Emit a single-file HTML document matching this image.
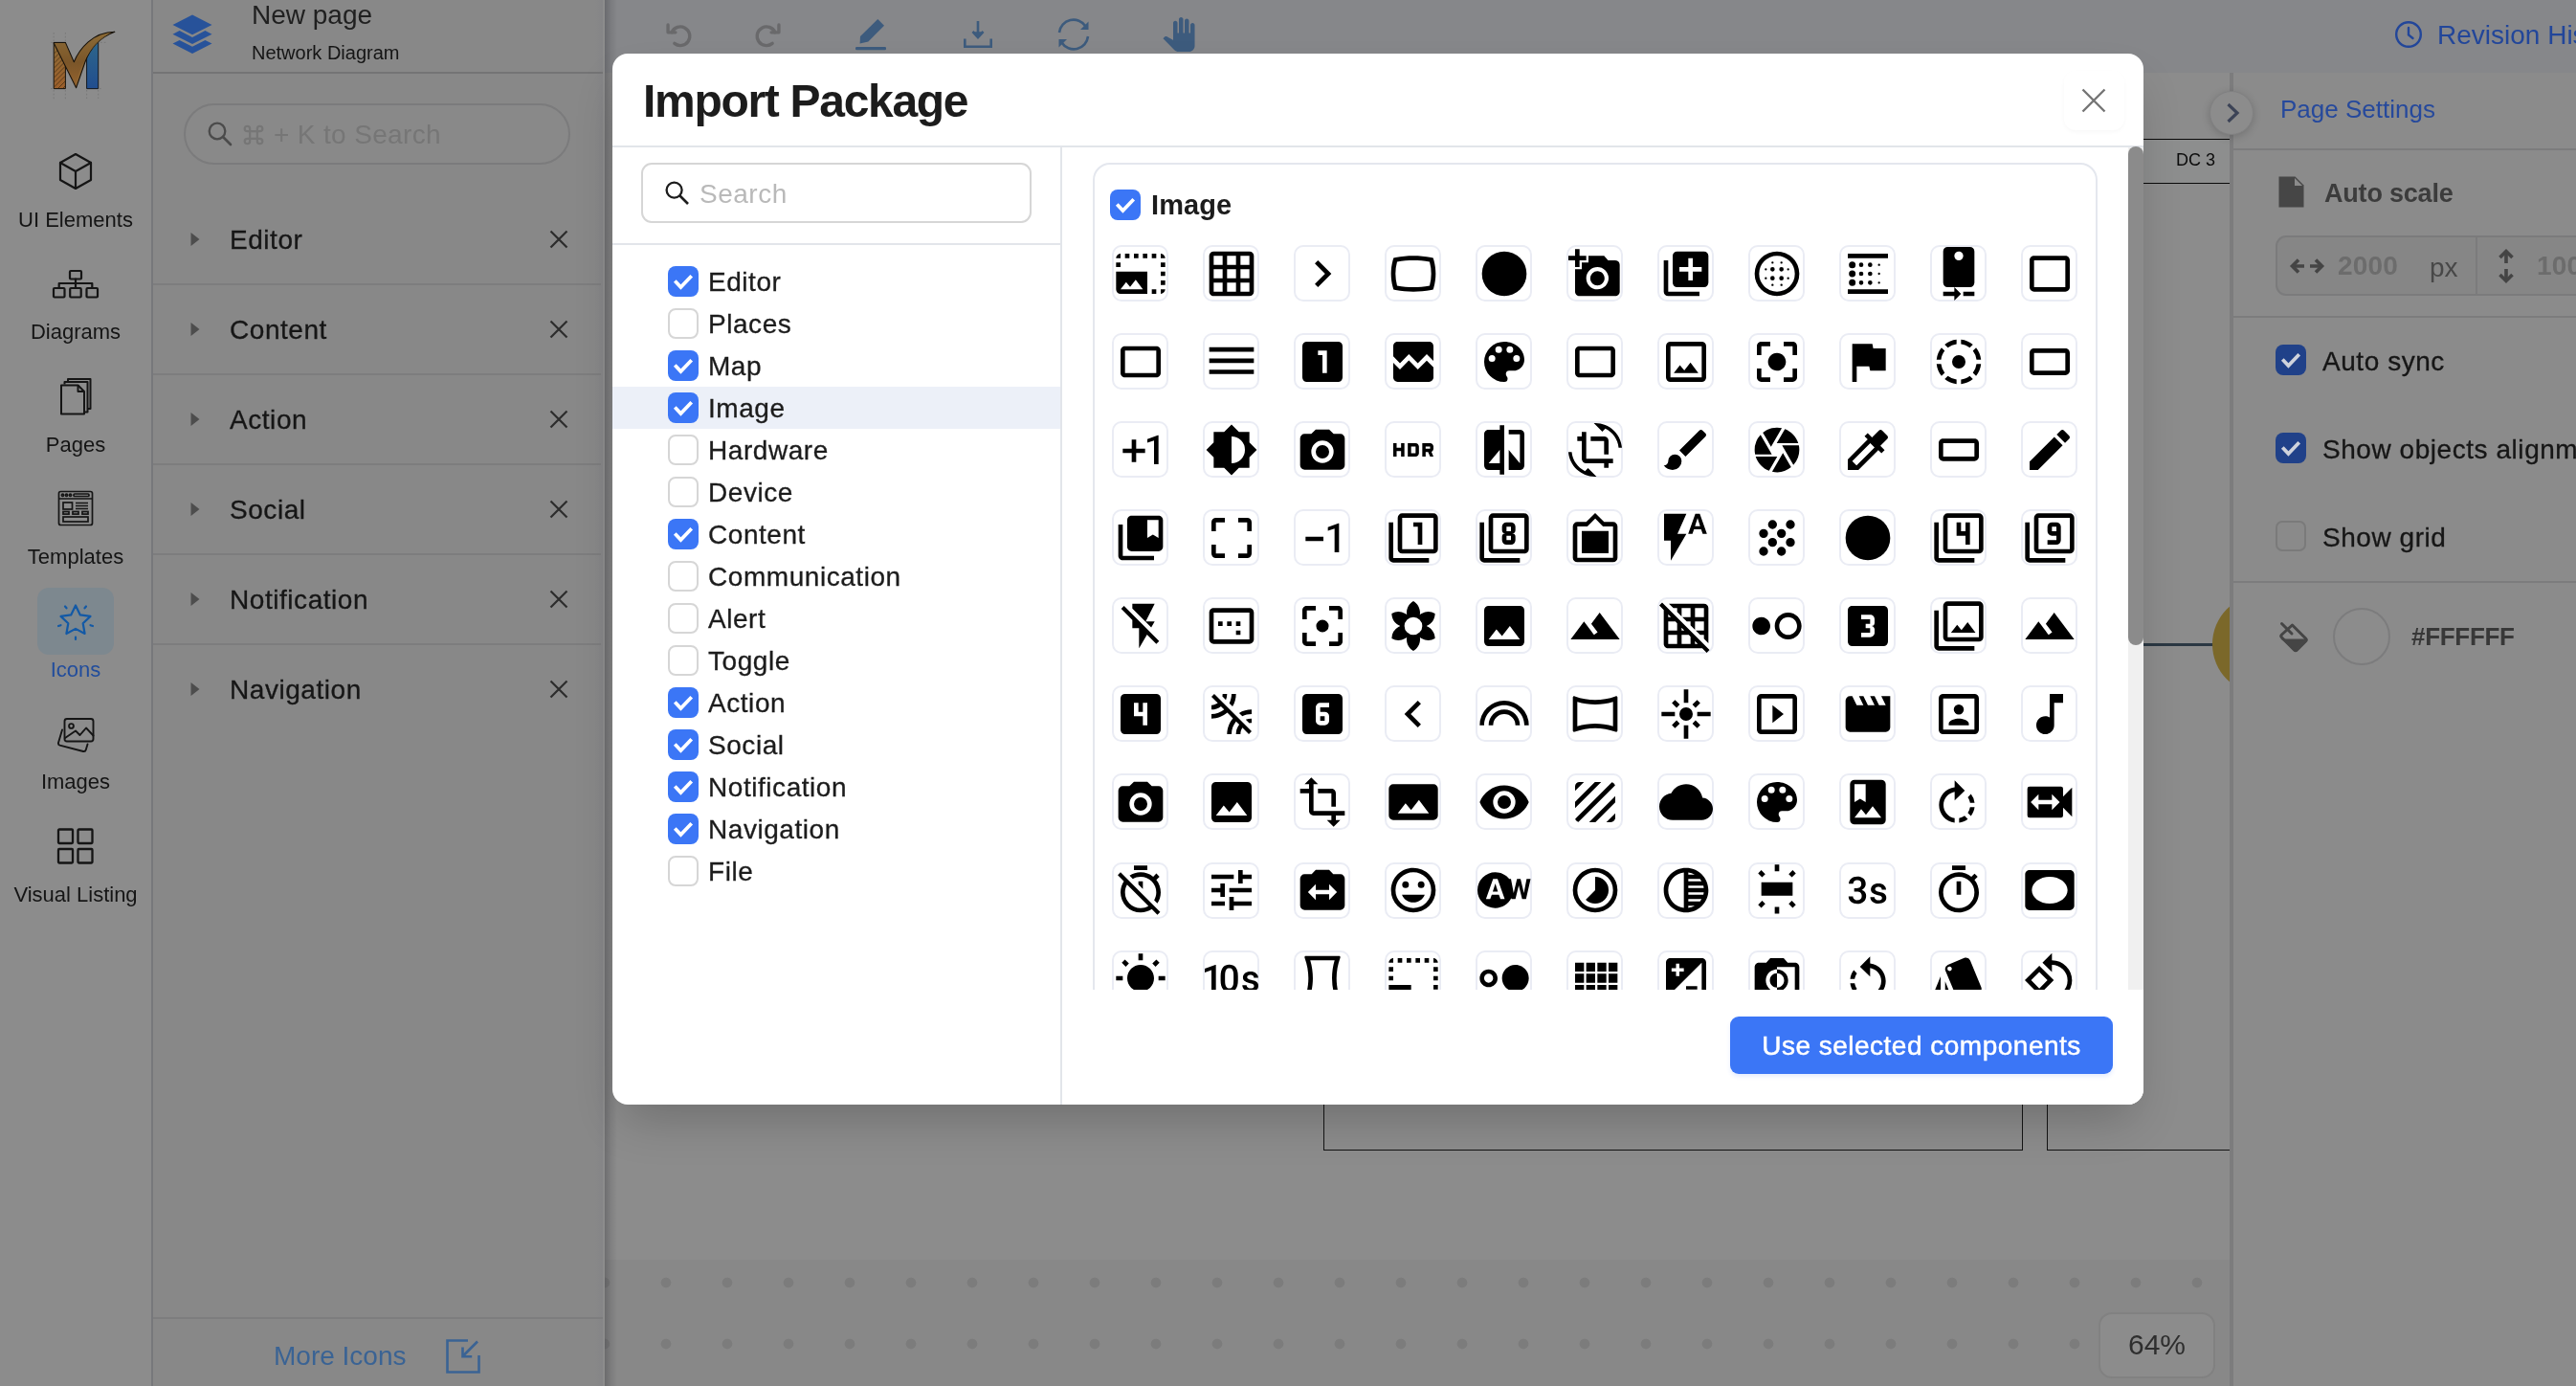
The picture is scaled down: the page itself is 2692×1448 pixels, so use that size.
<!DOCTYPE html>
<html><head><meta charset="utf-8"><title>Import Package</title><style>
*{box-sizing:border-box;margin:0;padding:0}
html{overflow:hidden}
body{width:2692px;height:1448px;overflow:hidden;zoom:calc(100vw / 2692px);position:relative;background:#8b8b8b;font-family:"Liberation Sans",sans-serif;color:#1a1a1a}
.a{position:absolute}
.t{white-space:nowrap;will-change:transform}
svg{display:block;overflow:visible}
</style></head>
<body>
<div class="a" style="left:631px;top:76px;width:1703px;height:1240px;background:#8c8c8c"></div>
<div class="a" style="left:631px;top:1316px;width:1703px;height:132px;background:#888888;background-image:radial-gradient(circle at 32px 32px,#7c7c7c 0,#7c7c7c 4.8px,rgba(124,124,124,0) 5.8px);background-size:64px 64px;background-position:-31px -8px"></div>
<div class="a" style="left:1382.5px;top:1100px;width:731px;height:102px;border:1.5px solid #141414;border-top:none"></div>
<div class="a" style="left:2138.5px;top:1100px;width:260px;height:102px;border:1.5px solid #141414;border-top:none;border-right:none"></div>
<div class="a" style="left:2236px;top:145px;width:95px;height:47px;background:#8d8e8e;border-top:1.5px solid #0a0a0a;border-bottom:1.5px solid #0a0a0a"></div>
<div class="a t" style="top:155.0px;font-size:18px;line-height:25px;color:#0c0c0c;left:2274px;">DC 3</div>
<div class="a" style="left:2230px;top:672px;width:84px;height:3px;background:#2b3843"></div>
<div class="a" style="left:2312px;top:621px;width:104px;height:104px;border-radius:50%;background:#7b682a"></div>
<div class="a" style="left:2193px;top:1371px;width:122px;height:69px;border-radius:14px;background:#8c8c8c;border:2px solid #818181"></div>
<div class="a t" style="top:1383.5px;font-size:30px;line-height:42px;color:#2e2e2e;left:1954px;width:600px;text-align:center;">64%</div>
<div class="a" style="left:631px;top:0;width:2061px;height:76px;background:#86878a"></div>
<svg class="a" style="left:696px;top:22.5px" width="28" height="28" viewBox="0 0 30 30" ><path d="M6.5 11.5 A10.5 10.5 0 1 1 9.5 24" fill="none" stroke="#69696b" stroke-width="3.6" stroke-linecap="round"/><path d="M2.2 3.2 V11.6 H10.6" fill="none" stroke="#69696b" stroke-width="3.6" stroke-linecap="round" stroke-linejoin="round"/></svg>
<svg class="a" style="left:788px;top:22.5px" width="28" height="28" viewBox="0 0 30 30" ><g transform="translate(30,0) scale(-1,1)"><path d="M6.5 11.5 A10.5 10.5 0 1 1 9.5 24" fill="none" stroke="#69696b" stroke-width="3.6" stroke-linecap="round"/><path d="M2.2 3.2 V11.6 H10.6" fill="none" stroke="#69696b" stroke-width="3.6" stroke-linecap="round" stroke-linejoin="round"/></g></svg>
<svg class="a" style="left:892px;top:18px" width="36" height="36" viewBox="0 0 36 36" ><path d="M25.3 2 L32 8.8 L15.3 25.5 L6.6 27.4 L7 20 Z" fill="#3d5b7d"/><rect x="2" y="31" width="32" height="3.2" rx="1.2" fill="#3d5b7d"/></svg>
<svg class="a" style="left:1005px;top:20px" width="34" height="32" viewBox="0 0 34 32" ><path d="M17 2 V18 M11.5 13 L17 19 L22.5 13" fill="none" stroke="#3d5b7d" stroke-width="2.6"/><path d="M22.8 13.2 L17 20 L11.2 13.2 Z" fill="#3d5b7d"/><path d="M3.3 20.5 V28.7 H30.7 V20.5" fill="none" stroke="#3d5b7d" stroke-width="2.6"/></svg>
<svg class="a" style="left:1103px;top:18px" width="38" height="36" viewBox="0 0 38 36" ><path d="M4 16 A15 15 0 0 1 31.5 9.5" fill="none" stroke="#3d5b7d" stroke-width="2.6"/><path d="M34 20 A15 15 0 0 1 6.5 26.5" fill="none" stroke="#3d5b7d" stroke-width="2.6"/><path d="M34.5 4.5 V13 H26 Z" fill="#3d5b7d"/><path d="M3.5 31.5 V23 H12 Z" fill="#3d5b7d"/></svg>
<svg class="a" style="left:1214px;top:18px" width="36" height="36" viewBox="0 0 24 24" ><path d="M23 5.5V20c0 2.2-1.8 4-4 4h-7.3c-1.08 0-2.1-.43-2.85-1.19L1 14.83s1.26-1.23 1.3-1.25c.22-.19.49-.29.79-.29.22 0 .42.06.6.16.04.01 4.31 2.46 4.31 2.46V4c0-.83.67-1.5 1.5-1.5S11 3.17 11 4v7h1V1.5c0-.83.67-1.5 1.5-1.5S15 .67 15 1.5V11h1V2.5c0-.83.67-1.5 1.5-1.5s1.5.67 1.5 1.5V11h1V5.5c0-.83.67-1.5 1.5-1.5s1.5.67 1.5 1.5z" fill="#3d5b7d"/></svg>
<svg class="a" style="left:2502px;top:21px" width="30" height="30" viewBox="0 0 30 30" ><circle cx="15" cy="15" r="12.8" fill="none" stroke="#22469a" stroke-width="2.4"/><path d="M15 8 V15.5 L19.5 19" fill="none" stroke="#22469a" stroke-width="2.4" stroke-linecap="round"/></svg>
<div class="a t" style="top:16.5px;font-size:28px;line-height:39px;color:#22469a;left:2547px;">Revision History</div>
<div class="a" style="left:160px;top:0;width:472px;height:1448px;background:linear-gradient(90deg,#888888 0,#888888 462px,#858587 469.5px,#8c8c8c 470px,#8c8c8c 472px)"></div>
<div class="a" style="left:632px;top:0;width:13px;height:1448px;background:linear-gradient(90deg,rgba(40,40,46,.30),rgba(40,40,46,.12) 50%,rgba(40,40,46,0))"></div>
<svg class="a" style="left:179px;top:14px" width="44" height="44" viewBox="0 0 44 44" ><g fill="#27529a"><path d="M22 1.5 L42.5 11.9 L22 22.3 L1.5 11.9 Z"/><path d="M1.5 21.7 L8.6 18.1 L22 24.9 L35.4 18.1 L42.5 21.7 L22 32.1 Z"/><path d="M1.5 31.5 L8.6 27.9 L22 34.7 L35.4 27.9 L42.5 31.5 L22 41.9 Z"/></g></svg>
<div class="a t" style="top:-4.0px;font-size:28px;line-height:39px;color:#202020;left:263px;">New page</div>
<div class="a t" style="top:40.5px;font-size:20px;line-height:28px;color:#151515;left:263px;">Network Diagram</div>
<div class="a" style="left:160px;top:75px;width:470px;height:1.5px;background:#747475"></div>
<div class="a" style="left:192px;top:108px;width:404px;height:64px;border-radius:32px;border:2px solid #7b7b7c;background:#898989"></div>
<svg class="a" style="left:216px;top:126px" width="28" height="28" viewBox="0 0 28 28" ><circle cx="11" cy="11" r="8.300" fill="none" stroke="#4b4b4b" stroke-width="2.300"/><path d="M17 17 L25 25" stroke="#4b4b4b" stroke-width="2.600" stroke-linecap="round"/></svg>
<svg class="a" style="left:253px;top:129px" width="24" height="24" viewBox="0 0 22 22" ><path d="M7.500 7.500 H14.500 V14.500 H7.500 Z M7.500 7.500 V5 A2.500 2.500 0 1 0 5 7.500 H7.500 M14.500 7.500 H17 A2.500 2.500 0 1 0 14.500 5 V7.500 M14.500 14.500 V17 A2.500 2.500 0 1 0 17 14.500 H14.500 M7.500 14.500 H5 A2.500 2.500 0 1 0 7.500 17 V14.500" fill="none" stroke="#767676" stroke-width="2"/></svg>
<div class="a t" style="top:120.5px;font-size:28px;line-height:39px;color:#767676;letter-spacing:0.35px;left:286px;">+ K to Search</div>
<svg class="a" style="left:199px;top:242px" width="10" height="16" viewBox="0 0 10 16" ><path d="M0.500 1 L9.500 8 L0.500 15 Z" fill="#4d4d4d"/></svg>
<div class="a t" style="top:230.5px;font-size:28px;line-height:39px;color:#161616;letter-spacing:0.55px;left:240px;-webkit-text-stroke:0.3px #161616;">Editor</div>
<svg class="a" style="left:574px;top:240px" width="20" height="20" viewBox="0 0 20 20" ><path d="M1.500 1.500 L18.500 18.500 M18.500 1.500 L1.500 18.500" stroke="#2c2c2c" stroke-width="2.200" fill="none"/></svg>
<div class="a" style="left:160px;top:296px;width:468px;height:2px;background:#7d7d7e"></div>
<svg class="a" style="left:199px;top:336px" width="10" height="16" viewBox="0 0 10 16" ><path d="M0.500 1 L9.500 8 L0.500 15 Z" fill="#4d4d4d"/></svg>
<div class="a t" style="top:324.5px;font-size:28px;line-height:39px;color:#161616;letter-spacing:0.55px;left:240px;-webkit-text-stroke:0.3px #161616;">Content</div>
<svg class="a" style="left:574px;top:334px" width="20" height="20" viewBox="0 0 20 20" ><path d="M1.500 1.500 L18.500 18.500 M18.500 1.500 L1.500 18.500" stroke="#2c2c2c" stroke-width="2.200" fill="none"/></svg>
<div class="a" style="left:160px;top:390px;width:468px;height:2px;background:#7d7d7e"></div>
<svg class="a" style="left:199px;top:430px" width="10" height="16" viewBox="0 0 10 16" ><path d="M0.500 1 L9.500 8 L0.500 15 Z" fill="#4d4d4d"/></svg>
<div class="a t" style="top:418.5px;font-size:28px;line-height:39px;color:#161616;letter-spacing:0.55px;left:240px;-webkit-text-stroke:0.3px #161616;">Action</div>
<svg class="a" style="left:574px;top:428px" width="20" height="20" viewBox="0 0 20 20" ><path d="M1.500 1.500 L18.500 18.500 M18.500 1.500 L1.500 18.500" stroke="#2c2c2c" stroke-width="2.200" fill="none"/></svg>
<div class="a" style="left:160px;top:484px;width:468px;height:2px;background:#7d7d7e"></div>
<svg class="a" style="left:199px;top:524px" width="10" height="16" viewBox="0 0 10 16" ><path d="M0.500 1 L9.500 8 L0.500 15 Z" fill="#4d4d4d"/></svg>
<div class="a t" style="top:512.5px;font-size:28px;line-height:39px;color:#161616;letter-spacing:0.55px;left:240px;-webkit-text-stroke:0.3px #161616;">Social</div>
<svg class="a" style="left:574px;top:522px" width="20" height="20" viewBox="0 0 20 20" ><path d="M1.500 1.500 L18.500 18.500 M18.500 1.500 L1.500 18.500" stroke="#2c2c2c" stroke-width="2.200" fill="none"/></svg>
<div class="a" style="left:160px;top:578px;width:468px;height:2px;background:#7d7d7e"></div>
<svg class="a" style="left:199px;top:618px" width="10" height="16" viewBox="0 0 10 16" ><path d="M0.500 1 L9.500 8 L0.500 15 Z" fill="#4d4d4d"/></svg>
<div class="a t" style="top:606.5px;font-size:28px;line-height:39px;color:#161616;letter-spacing:0.55px;left:240px;-webkit-text-stroke:0.3px #161616;">Notification</div>
<svg class="a" style="left:574px;top:616px" width="20" height="20" viewBox="0 0 20 20" ><path d="M1.500 1.500 L18.500 18.500 M18.500 1.500 L1.500 18.500" stroke="#2c2c2c" stroke-width="2.200" fill="none"/></svg>
<div class="a" style="left:160px;top:672px;width:468px;height:2px;background:#7d7d7e"></div>
<svg class="a" style="left:199px;top:712px" width="10" height="16" viewBox="0 0 10 16" ><path d="M0.500 1 L9.500 8 L0.500 15 Z" fill="#4d4d4d"/></svg>
<div class="a t" style="top:700.5px;font-size:28px;line-height:39px;color:#161616;letter-spacing:0.55px;left:240px;-webkit-text-stroke:0.3px #161616;">Navigation</div>
<svg class="a" style="left:574px;top:710px" width="20" height="20" viewBox="0 0 20 20" ><path d="M1.500 1.500 L18.500 18.500 M18.500 1.500 L1.500 18.500" stroke="#2c2c2c" stroke-width="2.200" fill="none"/></svg>
<div class="a" style="left:160px;top:1376px;width:470px;height:2px;background:#7d7d7e"></div>
<div class="a t" style="top:1396.5px;font-size:28px;line-height:39px;color:#3a6394;left:286px;">More Icons</div>
<svg class="a" style="left:465px;top:1398px" width="38" height="38" viewBox="0 0 38 38" ><path d="M24 2.500 H2.500 V35.500 H35.500 V18" fill="none" stroke="#3a6394" stroke-width="2.600"/><path d="M34 3.500 L19 18.500" stroke="#3a6394" stroke-width="2.600" fill="none"/><path d="M18.500 9.500 V19.200 H28.200" fill="none" stroke="#3a6394" stroke-width="2.600"/></svg>
<div class="a" style="left:0;top:0;width:160px;height:1448px;background:#8c8c8c;border-right:2px solid #77787b"></div>
<svg class="a" style="left:40px;top:20px" width="100" height="90" viewBox="0 0 100 90" ><defs>
<linearGradient id="lg1" x1="0" y1="0" x2="0" y2="1"><stop offset="0" stop-color="#8c6b37"/><stop offset="1" stop-color="#9d5f2a"/></linearGradient>
<linearGradient id="lg2" x1="0" y1="0" x2="0" y2="1"><stop offset="0" stop-color="#2e678a"/><stop offset="1" stop-color="#214d8f"/></linearGradient>
<linearGradient id="lg3" x1="0" y1="0" x2="0" y2="1"><stop offset="0" stop-color="#8d6c37"/><stop offset=".55" stop-color="#7b5629"/><stop offset="1" stop-color="#96642f"/></linearGradient>
</defs>
<g stroke="#747474" stroke-width=".8" stroke-dasharray="1.6 2.2" fill="none"><path d="M16.2 14V23M28.4 14V23M16.2 74V84M28.4 74V84M50.6 74V83M62.7 74V83M13 24.4H15.500M65 24.4H71M13 72.6H15.500M64 72.6H67"/></g>
<path d="M50.600 72.600 V38 L62.700 22 V72.600 Z" fill="url(#lg2)" stroke="#121820" stroke-width="1" stroke-linejoin="round"/>
<path d="M16.200 24.400 H28.400 V72.600 H16.200 Z" fill="url(#lg1)" stroke="#17120b" stroke-width="1" stroke-linejoin="round"/>
<g stroke="#3a2812" stroke-width=".8" opacity=".85"><path d="M16.500 36l6-6M16.500 41l9-9M16.500 46l11.500-11.500M16.500 51l11.500-11.500M16.500 56l11.500-11.500M16.500 61l11.500-11.500M16.500 66l11.500-11.500M16.500 71l11.500-11.500M21 72l7-7M26 72l2-2"/></g>
<path d="M16.200 24.400 H28.400 L37.300 44.800 C43 31 57 13.500 79.900 13.300 C66 18.500 55 28 48.700 45.500 L39.600 71.750 L16.500 25.500 Z" fill="url(#lg3)" stroke="#17120b" stroke-width="1.050" stroke-linejoin="round"/>
<path d="M39.600 69 C42 52 54 26 76 14.500 C62 20 52 32 47.500 45.500 Z" fill="#93703a" opacity=".55"/></svg>
<svg class="a" style="left:59px;top:157px" width="40" height="44" viewBox="0 0 40 44" ><g stroke="#151515" stroke-width="2.2" fill="none" stroke-linejoin="round" stroke-linecap="round"><path d="M20 4 L36 13 V31 L20 40 L4 31 V13 Z"/><path d="M4 13 L20 22 L36 13 M20 22 V40"/></g></svg>
<div class="a t" style="top:213.5px;font-size:22px;line-height:31px;color:#151515;left:-221px;width:600px;text-align:center;">UI Elements</div>
<svg class="a" style="left:54px;top:281px" width="50" height="32" viewBox="0 0 50 32" ><g stroke="#151515" stroke-width="2.2" fill="none" stroke-linejoin="round" stroke-linecap="round"><rect x="19" y="2" width="12" height="8.500" rx="1"/><rect x="2" y="20" width="11.500" height="9.500" rx="1"/><rect x="19.200" y="20" width="11.500" height="9.500" rx="1"/><rect x="36.500" y="20" width="11.500" height="9.500" rx="1"/><path d="M25 10.500 V20 M7.700 20 V15 H42.300 V20"/></g></svg>
<div class="a t" style="top:331.0px;font-size:22px;line-height:31px;color:#151515;left:-221px;width:600px;text-align:center;">Diagrams</div>
<svg class="a" style="left:61px;top:393px" width="36" height="42" viewBox="0 0 36 42" ><g stroke="#151515" stroke-width="2" fill="none" stroke-linejoin="round"><path d="M10 5 V3 H33.500 V34 H31"/><path d="M6.500 8.500 V6 H30.500 V37.500 H28"/><path d="M3 9.500 H20.500 L27 16 V39.500 H3 Z"/><path d="M20.500 9.500 V16 H27"/></g></svg>
<div class="a t" style="top:448.5px;font-size:22px;line-height:31px;color:#151515;left:-221px;width:600px;text-align:center;">Pages</div>
<svg class="a" style="left:60px;top:512px" width="38" height="38" viewBox="0 0 38 38" ><g stroke="#151515" stroke-width="1.700" fill="none"><rect x="1.500" y="1.500" width="35" height="35" rx="2"/><path d="M1.500 9 H36.500"/><rect x="17" y="4" width="16" height="2.500" rx="1"/><circle cx="5.500" cy="5.300" r="1.100"/><circle cx="9.500" cy="5.300" r="1.100"/><circle cx="13.500" cy="5.300" r="1.100"/><rect x="6" y="13" width="9.500" height="7"/><path d="M19 13.500H32M19 16.500H32M19 19.500H32"/><rect x="6" y="22.500" width="6" height="2.600"/><rect x="16" y="22.500" width="6" height="2.600"/><rect x="26" y="22.500" width="6" height="2.600"/><rect x="6" y="28" width="26" height="5"/></g></svg>
<div class="a t" style="top:566.0px;font-size:22px;line-height:31px;color:#151515;left:-221px;width:600px;text-align:center;">Templates</div>
<div class="a" style="left:39px;top:614px;width:80px;height:70px;border-radius:12px;background:#7d888f"></div>
<svg class="a" style="left:59px;top:628px" width="40" height="42" viewBox="0 0 40 42" ><g stroke="#1259a6" stroke-width="2.200" fill="none" stroke-linejoin="round" stroke-linecap="round"><path d="M20 4.500 L24.800 14.400 L35.500 15.900 L27.700 23.300 L29.600 34 L20 28.900 L10.400 34 L12.300 23.300 L4.500 15.900 L15.200 14.400 Z"/><path d="M9 5.500l1.500 1.800M31 5.500l-1.500 1.800M2 26l2.500-.8M38 26l-2.500-.8M20 37.500v2.500"/></g></svg>
<div class="a t" style="top:683.5px;font-size:22px;line-height:31px;color:#224d9c;left:-221px;width:600px;text-align:center;">Icons</div>
<svg class="a" style="left:58px;top:748px" width="42" height="40" viewBox="0 0 42 40" ><g stroke="#151515" stroke-width="1.900" fill="none" stroke-linejoin="round" stroke-linecap="round"><rect x="9.500" y="3" width="30" height="23.500" rx="2.500"/><circle cx="16.500" cy="10.500" r="2.400"/><path d="M10 23 L21 15.500 L25.500 20 L32 12.500 L39.500 20.500"/><path d="M7 14.500 L3 28 Q2.600 30 4.500 30.600 L29 37 Q31.200 37.400 31.800 35.200 L33.500 29.500"/></g></svg>
<div class="a t" style="top:801.0px;font-size:22px;line-height:31px;color:#151515;left:-221px;width:600px;text-align:center;">Images</div>
<svg class="a" style="left:59px;top:864px" width="40" height="40" viewBox="0 0 40 40" ><g stroke="#151515" stroke-width="2.300" fill="none" stroke-linejoin="round"><rect x="2" y="2.500" width="15" height="14.500" rx="1"/><rect x="22.500" y="2.500" width="15" height="14.500" rx="1"/><rect x="2" y="23" width="15" height="14.500" rx="1"/><rect x="22.500" y="23" width="15" height="14.500" rx="1"/></g></svg>
<div class="a t" style="top:918.5px;font-size:22px;line-height:31px;color:#151515;left:-221px;width:600px;text-align:center;">Visual Listing</div>
<div class="a" style="left:2330px;top:76px;width:362px;height:1372px;background:#8b8b8b;border-left:4px solid #7c7c7d"></div>
<div class="a t" style="top:96.0px;font-size:26px;line-height:36px;color:#26499c;left:2383px;">Page Settings</div>
<div class="a" style="left:2334px;top:154.5px;width:358px;height:2px;background:#7c7c7d"></div>
<div class="a" style="left:2309px;top:95px;width:46px;height:46px;border-radius:50%;background:#8c8c8c;border:1.500px solid #808081;box-shadow:0 2px 8px rgba(0,0,0,.18)"></div>
<svg class="a" style="left:2322px;top:106px" width="22" height="24" viewBox="0 0 22 24" ><path d="M6.500 3 L16 12 L6.500 21" fill="none" stroke="#3c4356" stroke-width="3.200"/></svg>
<svg class="a" style="left:2381px;top:184px" width="27" height="33" viewBox="0 0 27 33" ><path d="M0.500 0.500 H17.500 L26.500 9.500 V32.500 H0.500 Z" fill="#464646"/><path d="M17 2 V10 H25 Z" fill="#8b8b8b"/></svg>
<div class="a t" style="top:183.0px;font-size:27px;line-height:38px;color:#3c3c3c;font-weight:700;letter-spacing:-0.2px;left:2429px;">Auto scale</div>
<div class="a" style="left:2378px;top:246px;width:340px;height:63px;border-radius:11px;border:2px solid #7b7b7c;background:#868686"></div>
<div class="a" style="left:2587px;top:248px;width:2px;height:59px;background:#7b7b7c"></div>
<svg class="a" style="left:2393px;top:267px" width="36" height="22" viewBox="0 0 36 22" ><path d="M5 11 H15 M21 11 H31" stroke="#444" stroke-width="3.600" fill="none"/><path d="M9 4.500 L2.500 11 L9 17.500 M27 4.500 L33.500 11 L27 17.500" stroke="#444" stroke-width="3.600" fill="none" stroke-linejoin="miter"/></svg>
<div class="a t" style="top:258.0px;font-size:28px;line-height:39px;color:#6c6c6c;font-weight:700;letter-spacing:0.2px;left:2443px;">2000</div>
<div class="a t" style="top:259.5px;font-size:28px;line-height:39px;color:#484848;left:2539px;">px</div>
<svg class="a" style="left:2608px;top:260px" width="22" height="36" viewBox="0 0 22 36" ><path d="M11 5 V15 M11 21 V31" stroke="#444" stroke-width="3.600" fill="none"/><path d="M4.500 9 L11 2.500 L17.500 9 M4.500 27 L11 33.500 L17.500 27" stroke="#444" stroke-width="3.600" fill="none"/></svg>
<div class="a t" style="top:258.0px;font-size:28px;line-height:39px;color:#6c6c6c;font-weight:700;letter-spacing:0.2px;left:2651px;">1000</div>
<div class="a" style="left:2334px;top:329.5px;width:358px;height:2px;background:#7c7c7d"></div>
<div class="a" style="left:2378px;top:360px;width:32px;height:32px;border-radius:8px;background:#204189"></div><svg class="a" style="left:2378px;top:360px" width="32" height="32" viewBox="0 0 32 32" ><path d="M7.300 15.400 L13.450 22.100 L24.700 10.250" fill="none" stroke="#cfd3dc" stroke-width="3.700"/></svg>
<div class="a t" style="top:357.5px;font-size:28px;line-height:39px;color:#161616;letter-spacing:0.55px;left:2427px;-webkit-text-stroke:0.3px #161616;">Auto sync</div>
<div class="a" style="left:2378px;top:452px;width:32px;height:32px;border-radius:8px;background:#204189"></div><svg class="a" style="left:2378px;top:452px" width="32" height="32" viewBox="0 0 32 32" ><path d="M7.300 15.400 L13.450 22.100 L24.700 10.250" fill="none" stroke="#cfd3dc" stroke-width="3.700"/></svg>
<div class="a t" style="top:449.5px;font-size:28px;line-height:39px;color:#161616;letter-spacing:0.55px;left:2427px;-webkit-text-stroke:0.3px #161616;">Show objects alignment</div>
<div class="a" style="left:2378px;top:544px;width:32px;height:32px;border-radius:7px;border:2px solid #7a7a7a;background:#8a8a8a"></div>
<div class="a t" style="top:541.5px;font-size:28px;line-height:39px;color:#161616;letter-spacing:0.55px;left:2427px;-webkit-text-stroke:0.3px #161616;">Show grid</div>
<div class="a" style="left:2334px;top:607px;width:358px;height:2px;background:#7c7c7d"></div>
<svg class="a" style="left:2380px;top:648px" width="34" height="34" viewBox="0 0 34 34" ><path d="M4.500 3.500 L15 14" stroke="#454545" stroke-width="3" stroke-linecap="round" fill="none"/><path d="M15.500 5 L29.500 19 Q31 20.500 29.500 22 L20.500 31 Q19 32.500 17.500 31 L4.500 18 Q3 16.500 4.500 15 Z" fill="none" stroke="#454545" stroke-width="3" stroke-linejoin="round"/><path d="M3.500 19.500 H30.500 L19 31.500 Z" fill="#454545"/></svg>
<div class="a" style="left:2438px;top:635px;width:60px;height:60px;border-radius:50%;border:2px solid #7c7c7d;background:#8c8c8c"></div>
<div class="a t" style="top:647.0px;font-size:26px;line-height:36px;color:#383838;font-weight:700;letter-spacing:-0.3px;left:2520px;">#FFFFFF</div>
<div class="a" style="left:640px;top:56px;width:1600px;height:1098px;border-radius:16px;background:#fff;box-shadow:0 25px 50px -12px rgba(0,0,0,.22);overflow:hidden">
</div>
<div class="a t" style="top:75.5px;font-size:48px;line-height:60px;color:#1c1c1c;font-weight:700;letter-spacing:-1.3px;left:672px;">Import Package</div>
<div class="a" style="left:2157px;top:74px;width:63px;height:62px;border-radius:12px;box-shadow:0 2px 4px rgba(0,0,0,.03)"></div>
<svg class="a" style="left:2175px;top:92px" width="26" height="26" viewBox="0 0 26 26" ><path d="M1.500 1.500 L24.500 24.500 M24.500 1.500 L1.500 24.500" stroke="#757575" stroke-width="2.400" fill="none"/></svg>
<div class="a" style="left:640px;top:152px;width:1600px;height:2px;background:#e2e5ea"></div>
<div class="a" style="left:1108px;top:154px;width:2px;height:1000px;background:#e2e5ea"></div>
<div class="a" style="left:670px;top:170px;width:408px;height:63px;border-radius:11px;border:2px solid #d6d6d6;background:#fff"></div>
<svg class="a" style="left:694px;top:188px" width="28" height="28" viewBox="0 0 28 28" ><circle cx="10.600" cy="10.600" r="8" fill="none" stroke="#1d1d1d" stroke-width="2.300"/><path d="M16.500 16.500 L25 25" stroke="#1d1d1d" stroke-width="2.600"/></svg>
<div class="a t" style="top:182.5px;font-size:28px;line-height:39px;color:#b9b9b9;letter-spacing:0.5px;left:731px;">Search</div>
<div class="a" style="left:640px;top:254px;width:468px;height:2px;background:#e2e5ea"></div>
<div class="a" style="left:698px;top:278px;width:32px;height:32px;border-radius:8px;background:#3b76f6"></div><svg class="a" style="left:698px;top:278px" width="32" height="32" viewBox="0 0 32 32" ><path d="M7.300 15.400 L13.450 22.100 L24.700 10.250" fill="none" stroke="#fff" stroke-width="3.700"/></svg>
<div class="a t" style="top:274.5px;font-size:28px;line-height:39px;color:#1c1c1c;letter-spacing:0.55px;left:740px;-webkit-text-stroke:0.3px #1c1c1c;">Editor</div>
<div class="a" style="left:698px;top:322px;width:32px;height:32px;border-radius:8px;border:2px solid #d6d6d6;background:#fff"></div>
<div class="a t" style="top:318.5px;font-size:28px;line-height:39px;color:#1c1c1c;letter-spacing:0.55px;left:740px;-webkit-text-stroke:0.3px #1c1c1c;">Places</div>
<div class="a" style="left:698px;top:366px;width:32px;height:32px;border-radius:8px;background:#3b76f6"></div><svg class="a" style="left:698px;top:366px" width="32" height="32" viewBox="0 0 32 32" ><path d="M7.300 15.400 L13.450 22.100 L24.700 10.250" fill="none" stroke="#fff" stroke-width="3.700"/></svg>
<div class="a t" style="top:362.5px;font-size:28px;line-height:39px;color:#1c1c1c;letter-spacing:0.55px;left:740px;-webkit-text-stroke:0.3px #1c1c1c;">Map</div>
<div class="a" style="left:640px;top:404px;width:468px;height:44px;background:#ecf0f8"></div>
<div class="a" style="left:698px;top:410px;width:32px;height:32px;border-radius:8px;background:#3b76f6"></div><svg class="a" style="left:698px;top:410px" width="32" height="32" viewBox="0 0 32 32" ><path d="M7.300 15.400 L13.450 22.100 L24.700 10.250" fill="none" stroke="#fff" stroke-width="3.700"/></svg>
<div class="a t" style="top:406.5px;font-size:28px;line-height:39px;color:#1c1c1c;letter-spacing:0.55px;left:740px;-webkit-text-stroke:0.3px #1c1c1c;">Image</div>
<div class="a" style="left:698px;top:454px;width:32px;height:32px;border-radius:8px;border:2px solid #d6d6d6;background:#fff"></div>
<div class="a t" style="top:450.5px;font-size:28px;line-height:39px;color:#1c1c1c;letter-spacing:0.55px;left:740px;-webkit-text-stroke:0.3px #1c1c1c;">Hardware</div>
<div class="a" style="left:698px;top:498px;width:32px;height:32px;border-radius:8px;border:2px solid #d6d6d6;background:#fff"></div>
<div class="a t" style="top:494.5px;font-size:28px;line-height:39px;color:#1c1c1c;letter-spacing:0.55px;left:740px;-webkit-text-stroke:0.3px #1c1c1c;">Device</div>
<div class="a" style="left:698px;top:542px;width:32px;height:32px;border-radius:8px;background:#3b76f6"></div><svg class="a" style="left:698px;top:542px" width="32" height="32" viewBox="0 0 32 32" ><path d="M7.300 15.400 L13.450 22.100 L24.700 10.250" fill="none" stroke="#fff" stroke-width="3.700"/></svg>
<div class="a t" style="top:538.5px;font-size:28px;line-height:39px;color:#1c1c1c;letter-spacing:0.55px;left:740px;-webkit-text-stroke:0.3px #1c1c1c;">Content</div>
<div class="a" style="left:698px;top:586px;width:32px;height:32px;border-radius:8px;border:2px solid #d6d6d6;background:#fff"></div>
<div class="a t" style="top:582.5px;font-size:28px;line-height:39px;color:#1c1c1c;letter-spacing:0.55px;left:740px;-webkit-text-stroke:0.3px #1c1c1c;">Communication</div>
<div class="a" style="left:698px;top:630px;width:32px;height:32px;border-radius:8px;border:2px solid #d6d6d6;background:#fff"></div>
<div class="a t" style="top:626.5px;font-size:28px;line-height:39px;color:#1c1c1c;letter-spacing:0.55px;left:740px;-webkit-text-stroke:0.3px #1c1c1c;">Alert</div>
<div class="a" style="left:698px;top:674px;width:32px;height:32px;border-radius:8px;border:2px solid #d6d6d6;background:#fff"></div>
<div class="a t" style="top:670.5px;font-size:28px;line-height:39px;color:#1c1c1c;letter-spacing:0.55px;left:740px;-webkit-text-stroke:0.3px #1c1c1c;">Toggle</div>
<div class="a" style="left:698px;top:718px;width:32px;height:32px;border-radius:8px;background:#3b76f6"></div><svg class="a" style="left:698px;top:718px" width="32" height="32" viewBox="0 0 32 32" ><path d="M7.300 15.400 L13.450 22.100 L24.700 10.250" fill="none" stroke="#fff" stroke-width="3.700"/></svg>
<div class="a t" style="top:714.5px;font-size:28px;line-height:39px;color:#1c1c1c;letter-spacing:0.55px;left:740px;-webkit-text-stroke:0.3px #1c1c1c;">Action</div>
<div class="a" style="left:698px;top:762px;width:32px;height:32px;border-radius:8px;background:#3b76f6"></div><svg class="a" style="left:698px;top:762px" width="32" height="32" viewBox="0 0 32 32" ><path d="M7.300 15.400 L13.450 22.100 L24.700 10.250" fill="none" stroke="#fff" stroke-width="3.700"/></svg>
<div class="a t" style="top:758.5px;font-size:28px;line-height:39px;color:#1c1c1c;letter-spacing:0.55px;left:740px;-webkit-text-stroke:0.3px #1c1c1c;">Social</div>
<div class="a" style="left:698px;top:806px;width:32px;height:32px;border-radius:8px;background:#3b76f6"></div><svg class="a" style="left:698px;top:806px" width="32" height="32" viewBox="0 0 32 32" ><path d="M7.300 15.400 L13.450 22.100 L24.700 10.250" fill="none" stroke="#fff" stroke-width="3.700"/></svg>
<div class="a t" style="top:802.5px;font-size:28px;line-height:39px;color:#1c1c1c;letter-spacing:0.55px;left:740px;-webkit-text-stroke:0.3px #1c1c1c;">Notification</div>
<div class="a" style="left:698px;top:850px;width:32px;height:32px;border-radius:8px;background:#3b76f6"></div><svg class="a" style="left:698px;top:850px" width="32" height="32" viewBox="0 0 32 32" ><path d="M7.300 15.400 L13.450 22.100 L24.700 10.250" fill="none" stroke="#fff" stroke-width="3.700"/></svg>
<div class="a t" style="top:846.5px;font-size:28px;line-height:39px;color:#1c1c1c;letter-spacing:0.55px;left:740px;-webkit-text-stroke:0.3px #1c1c1c;">Navigation</div>
<div class="a" style="left:698px;top:894px;width:32px;height:32px;border-radius:8px;border:2px solid #d6d6d6;background:#fff"></div>
<div class="a t" style="top:890.5px;font-size:28px;line-height:39px;color:#1c1c1c;letter-spacing:0.55px;left:740px;-webkit-text-stroke:0.3px #1c1c1c;">File</div>
<div class="a" style="left:1142px;top:170px;width:1050px;height:880px;border-radius:18px;border:2px solid #e4e7ee;background:#fff"></div>
<div class="a" style="left:1160px;top:198px;width:32px;height:32px;border-radius:8px;background:#3b76f6"></div><svg class="a" style="left:1160px;top:198px" width="32" height="32" viewBox="0 0 32 32" ><path d="M7.300 15.400 L13.450 22.100 L24.700 10.250" fill="none" stroke="#fff" stroke-width="3.700"/></svg>
<div class="a t" style="top:193.5px;font-size:29px;line-height:41px;color:#1c1c1c;font-weight:700;letter-spacing:0.1px;left:1203px;">Image</div>
<div class="a" style="left:1162.2px;top:256.1px;width:59px;height:59px;border-radius:10px;border:2px solid #eaecf4"></div>
<svg class="a" style="left:1163.8px;top:257.7px" width="56" height="56" viewBox="0 0 24 24" ><path d="M21 15h2v2h-2zm0-4h2v2h-2zm2 8h-2v2c1 0 2-1 2-2M13 3h2v2h-2zm8 4h2v2h-2zm0-4v2h2c0-1-1-2-2-2M1 7h2v2H1zm16-4h2v2h-2zm0 16h2v2h-2zM3 3C2 3 1 4 1 5h2zm6 0h2v2H9zM5 3h2v2H5zm-4 8v8a2 2 0 0 0 2 2h12V11zm2 8 2.5-3.21 1.79 2.15 2.5-3.22L13 19z" fill="#000"/></svg>
<div class="a" style="left:1257.2px;top:256.1px;width:59px;height:59px;border-radius:10px;border:2px solid #eaecf4"></div>
<svg class="a" style="left:1258.8px;top:257.7px" width="56" height="56" viewBox="0 0 24 24" ><path d="M10 4v4h4V4zm6 0v4h4V4zm0 6v4h4v-4zm0 6v4h4v-4zm-2 4v-4h-4v4zm-6 0v-4H4v4zm0-6v-4H4v4zm0-6V4H4v4zm2 6h4v-4h-4zM4 2h16a2 2 0 0 1 2 2v16a2 2 0 0 1-2 2H4c-1.08 0-2-.9-2-2V4a2 2 0 0 1 2-2" fill="#000"/></svg>
<div class="a" style="left:1352.2px;top:256.1px;width:59px;height:59px;border-radius:10px;border:2px solid #eaecf4"></div>
<svg class="a" style="left:1353.8px;top:257.7px" width="56" height="56" viewBox="0 0 24 24" ><path d="M8.59 16.58 13.17 12 8.59 7.41 10 6l6 6-6 6z" fill="#000"/></svg>
<div class="a" style="left:1447.2px;top:256.1px;width:59px;height:59px;border-radius:10px;border:2px solid #eaecf4"></div>
<svg class="a" style="left:1448.8px;top:257.7px" width="56" height="56" viewBox="0 0 24 24" ><path d="M12 4c-2.73 0-5.22.24-7.95.72l-.93.16-.25.9C2.29 7.85 2 9.93 2 12s.29 4.15.87 6.22l.25.89.93.16c2.73.49 5.22.73 7.95.73s5.22-.24 7.95-.72l.93-.16.25-.89c.58-2.08.87-4.16.87-6.23s-.29-4.15-.87-6.22l-.25-.89-.93-.16C17.22 4.24 14.73 4 12 4m0 2c2.45 0 4.71.2 7.29.64A21 21 0 0 1 20 12a21 21 0 0 1-.71 5.36c-2.58.44-4.84.64-7.29.64s-4.71-.2-7.29-.64A21 21 0 0 1 4 12a21 21 0 0 1 .71-5.36C7.29 6.2 9.55 6 12 6" fill="#000"/></svg>
<div class="a" style="left:1542.2px;top:256.1px;width:59px;height:59px;border-radius:10px;border:2px solid #eaecf4"></div>
<svg class="a" style="left:1543.8px;top:257.7px" width="56" height="56" viewBox="0 0 24 24" ><path d="M12 2A10 10 0 0 0 2 12a10 10 0 0 0 10 10 10 10 0 0 0 10-10A10 10 0 0 0 12 2" fill="#000"/></svg>
<div class="a" style="left:1637.2px;top:256.1px;width:59px;height:59px;border-radius:10px;border:2px solid #eaecf4"></div>
<svg class="a" style="left:1638.8px;top:257.7px" width="56" height="56" viewBox="0 0 24 24" ><path d="M3 4V1h2v3h3v2H5v3H3V6H0V4m6 6V7h3V4h7l1.8 2H21c1.1 0 2 .9 2 2v12c0 1.1-.9 2-2 2H5c-1.1 0-2-.9-2-2V10m10 9c4.45 0 6.69-5.38 3.54-8.54C13.39 7.31 8 9.55 8 14c0 2.76 2.24 5 5 5m-3.2-5c0 2.85 3.45 4.28 5.46 2.26 2.02-2.01.59-5.46-2.26-5.46A3.21 3.21 0 0 0 9.8 14" fill="#000"/></svg>
<div class="a" style="left:1732.2px;top:256.1px;width:59px;height:59px;border-radius:10px;border:2px solid #eaecf4"></div>
<svg class="a" style="left:1733.8px;top:257.7px" width="56" height="56" viewBox="0 0 24 24" ><path d="M19 11h-4v4h-2v-4H9V9h4V5h2v4h4m1-7H8a2 2 0 0 0-2 2v12a2 2 0 0 0 2 2h12a2 2 0 0 0 2-2V4a2 2 0 0 0-2-2M4 6H2v14a2 2 0 0 0 2 2h14v-2H4z" fill="#000"/></svg>
<div class="a" style="left:1827.2px;top:256.1px;width:59px;height:59px;border-radius:10px;border:2px solid #eaecf4"></div>
<svg class="a" style="left:1828.8px;top:257.7px" width="56" height="56" viewBox="0 0 24 24" ><path d="M14 13a1 1 0 0 0-1 1 1 1 0 0 0 1 1 1 1 0 0 0 1-1 1 1 0 0 0-1-1m0 3.5a.5.5 0 0 0-.5.5.5.5 0 0 0 .5.5.5.5 0 0 0 .5-.5.5.5 0 0 0-.5-.5M12 20a8 8 0 0 1-8-8 8 8 0 0 1 8-8 8 8 0 0 1 8 8 8 8 0 0 1-8 8m0-18A10 10 0 0 0 2 12a10 10 0 0 0 10 10 10 10 0 0 0 10-10A10 10 0 0 0 12 2m5 7.5a.5.5 0 0 0-.5.5.5.5 0 0 0 .5.5.5.5 0 0 0 .5-.5.5.5 0 0 0-.5-.5m0 4a.5.5 0 0 0-.5.5.5.5 0 0 0 .5.5.5.5 0 0 0 .5-.5.5.5 0 0 0-.5-.5m-3-6a.5.5 0 0 0 .5-.5.5.5 0 0 0-.5-.5.5.5 0 0 0-.5.5.5.5 0 0 0 .5.5M14 9a1 1 0 0 0-1 1 1 1 0 0 0 1 1 1 1 0 0 0 1-1 1 1 0 0 0-1-1m-4-1.5a.5.5 0 0 0 .5-.5.5.5 0 0 0-.5-.5.5.5 0 0 0-.5.5.5.5 0 0 0 .5.5m-3 6a.5.5 0 0 0-.5.5.5.5 0 0 0 .5.5.5.5 0 0 0 .5-.5.5.5 0 0 0-.5-.5m3 3a.5.5 0 0 0-.5.5.5.5 0 0 0 .5.5.5.5 0 0 0 .5-.5.5.5 0 0 0-.5-.5m-3-7a.5.5 0 0 0-.5.5.5.5 0 0 0 .5.5.5.5 0 0 0 .5-.5.5.5 0 0 0-.5-.5m3 3.5a1 1 0 0 0-1 1 1 1 0 0 0 1 1 1 1 0 0 0 1-1 1 1 0 0 0-1-1m0-4a1 1 0 0 0-1 1 1 1 0 0 0 1 1 1 1 0 0 0 1-1 1 1 0 0 0-1-1" fill="#000"/></svg>
<div class="a" style="left:1922.2px;top:256.1px;width:59px;height:59px;border-radius:10px;border:2px solid #eaecf4"></div>
<svg class="a" style="left:1923.8px;top:257.7px" width="56" height="56" viewBox="0 0 24 24" ><path d="M13 17a1 1 0 0 0 1-1 1 1 0 0 0-1-1 1 1 0 0 0-1 1 1 1 0 0 0 1 1m0-4a1 1 0 0 0 1-1 1 1 0 0 0-1-1 1 1 0 0 0-1 1 1 1 0 0 0 1 1m0-4a1 1 0 0 0 1-1 1 1 0 0 0-1-1 1 1 0 0 0-1 1 1 1 0 0 0 1 1m4 3.5a.5.5 0 0 0 .5-.5.5.5 0 0 0-.5-.5.5.5 0 0 0-.5.5.5.5 0 0 0 .5.5m0-4a.5.5 0 0 0 .5-.5.5.5 0 0 0-.5-.5.5.5 0 0 0-.5.5.5.5 0 0 0 .5.5M3 3v2h18V3m-4 13.5a.5.5 0 0 0 .5-.5.5.5 0 0 0-.5-.5.5.5 0 0 0-.5.5.5.5 0 0 0 .5.5M9 17a1 1 0 0 0 1-1 1 1 0 0 0-1-1 1 1 0 0 0-1 1 1 1 0 0 0 1 1m-4-3.5A1.5 1.5 0 0 0 6.5 12 1.5 1.5 0 0 0 5 10.5 1.5 1.5 0 0 0 3.5 12 1.5 1.5 0 0 0 5 13.5m0-4A1.5 1.5 0 0 0 6.5 8 1.5 1.5 0 0 0 5 6.5 1.5 1.5 0 0 0 3.5 8 1.5 1.5 0 0 0 5 9.5M3 21h18v-2H3M9 9a1 1 0 0 0 1-1 1 1 0 0 0-1-1 1 1 0 0 0-1 1 1 1 0 0 0 1 1m0 4a1 1 0 0 0 1-1 1 1 0 0 0-1-1 1 1 0 0 0-1 1 1 1 0 0 0 1 1m-4 4.5A1.5 1.5 0 0 0 6.5 16 1.5 1.5 0 0 0 5 14.5 1.5 1.5 0 0 0 3.5 16 1.5 1.5 0 0 0 5 17.5" fill="#000"/></svg>
<div class="a" style="left:2017.2px;top:256.1px;width:59px;height:59px;border-radius:10px;border:2px solid #eaecf4"></div>
<svg class="a" style="left:2018.8px;top:257.7px" width="56" height="56" viewBox="0 0 24 24" ><path d="M12 6a2 2 0 0 1-2-2 2 2 0 0 1 2-2c1.09 0 2 .9 2 2a2 2 0 0 1-2 2m5-6H7a2 2 0 0 0-2 2v14a2 2 0 0 0 2 2h10a2 2 0 0 0 2-2V2a2 2 0 0 0-2-2m-3 20v2h5v-2m-9 0H5v2h5v2l3-3-3-3z" fill="#000"/></svg>
<div class="a" style="left:2112.2px;top:256.1px;width:59px;height:59px;border-radius:10px;border:2px solid #eaecf4"></div>
<svg class="a" style="left:2113.8px;top:257.7px" width="56" height="56" viewBox="0 0 24 24" ><path d="M19 4H5c-1.1 0-2 .9-2 2v12c0 1.1.9 2 2 2h14c1.1 0 2-.9 2-2V6c0-1.1-.9-2-2-2zm0 14H5V6h14v12z" fill="#000"/></svg>
<div class="a" style="left:1162.2px;top:348.2px;width:59px;height:59px;border-radius:10px;border:2px solid #eaecf4"></div>
<svg class="a" style="left:1163.8px;top:349.8px" width="56" height="56" viewBox="0 0 24 24" ><path d="M19 5H5c-1.1 0-2 .9-2 2v10c0 1.1.9 2 2 2h14c1.1 0 2-.9 2-2V7c0-1.1-.9-2-2-2zm0 12H5V7h14v10z" fill="#000"/></svg>
<div class="a" style="left:1257.2px;top:348.2px;width:59px;height:59px;border-radius:10px;border:2px solid #eaecf4"></div>
<svg class="a" style="left:1258.8px;top:349.8px" width="56" height="56" viewBox="0 0 24 24" ><path d="M2 15.5v2h20v-2H2zm0-5v2h20v-2H2zm0-5v2h20v-2H2z" fill="#000"/></svg>
<div class="a" style="left:1352.2px;top:348.2px;width:59px;height:59px;border-radius:10px;border:2px solid #eaecf4"></div>
<svg class="a" style="left:1353.8px;top:349.8px" width="56" height="56" viewBox="0 0 24 24" ><path d="M14 17h-2V9h-2V7h4m5-4H5a2 2 0 0 0-2 2v14a2 2 0 0 0 2 2h14a2 2 0 0 0 2-2V5a2 2 0 0 0-2-2" fill="#000"/></svg>
<div class="a" style="left:1447.2px;top:348.2px;width:59px;height:59px;border-radius:10px;border:2px solid #eaecf4"></div>
<svg class="a" style="left:1448.8px;top:349.8px" width="56" height="56" viewBox="0 0 24 24" ><path d="M21 5v6.59l-3-3.01-4 4.01-4-4-4 4-3-3.01V5c0-1.1.9-2 2-2h14c1.1 0 2 .9 2 2zm-3 6.42l3 3.01V19c0 1.1-.9 2-2 2H5c-1.1 0-2-.9-2-2v-6.58l3 2.99 4-4 4 4 4-3.99z" fill="#000"/></svg>
<div class="a" style="left:1542.2px;top:348.2px;width:59px;height:59px;border-radius:10px;border:2px solid #eaecf4"></div>
<svg class="a" style="left:1543.8px;top:349.8px" width="56" height="56" viewBox="0 0 24 24" ><path d="M17.5 12a1.5 1.5 0 0 1-1.5-1.5A1.5 1.5 0 0 1 17.5 9a1.5 1.5 0 0 1 1.5 1.5 1.5 1.5 0 0 1-1.5 1.5m-3-4A1.5 1.5 0 0 1 13 6.5 1.5 1.5 0 0 1 14.5 5 1.5 1.5 0 0 1 16 6.5 1.5 1.5 0 0 1 14.5 8m-5 0A1.5 1.5 0 0 1 8 6.5 1.5 1.5 0 0 1 9.5 5 1.5 1.5 0 0 1 11 6.5 1.5 1.5 0 0 1 9.5 8m-3 4A1.5 1.5 0 0 1 5 10.5 1.5 1.5 0 0 1 6.5 9 1.5 1.5 0 0 1 8 10.5 1.5 1.5 0 0 1 6.5 12M12 3a9 9 0 0 0-9 9 9 9 0 0 0 9 9 1.5 1.5 0 0 0 1.5-1.5c0-.39-.15-.74-.39-1-.23-.27-.38-.62-.38-1a1.5 1.5 0 0 1 1.5-1.5H16a5 5 0 0 0 5-5c0-4.42-4.03-8-9-8" fill="#000"/></svg>
<div class="a" style="left:1637.2px;top:348.2px;width:59px;height:59px;border-radius:10px;border:2px solid #eaecf4"></div>
<svg class="a" style="left:1638.8px;top:349.8px" width="56" height="56" viewBox="0 0 24 24" ><path d="M19 5H5c-1.1 0-2 .9-2 2v10c0 1.1.9 2 2 2h14c1.1 0 2-.9 2-2V7c0-1.1-.9-2-2-2zm0 12H5V7h14v10z" fill="#000"/></svg>
<div class="a" style="left:1732.2px;top:348.2px;width:59px;height:59px;border-radius:10px;border:2px solid #eaecf4"></div>
<svg class="a" style="left:1733.8px;top:349.8px" width="56" height="56" viewBox="0 0 24 24" ><path d="M19 19H5V5h14m0-2H5a2 2 0 0 0-2 2v14a2 2 0 0 0 2 2h14a2 2 0 0 0 2-2V5a2 2 0 0 0-2-2m-5.04 9.29-2.75 3.54-1.96-2.36L6.5 17h11z" fill="#000"/></svg>
<div class="a" style="left:1827.2px;top:348.2px;width:59px;height:59px;border-radius:10px;border:2px solid #eaecf4"></div>
<svg class="a" style="left:1828.8px;top:349.8px" width="56" height="56" viewBox="0 0 24 24" ><path d="M12 8c-3.56 0-5.35 4.31-2.83 6.83S16 15.56 16 12c0-2.21-1.79-4-4-4m-7 7H3v4c0 1.1.9 2 2 2h4v-2H5M5 5h4V3H5c-1.1 0-2 .9-2 2v4h2m14-6h-4v2h4v4h2V5c0-1.1-.9-2-2-2m0 16h-4v2h4c1.1 0 2-.9 2-2v-4h-2" fill="#000"/></svg>
<div class="a" style="left:1922.2px;top:348.2px;width:59px;height:59px;border-radius:10px;border:2px solid #eaecf4"></div>
<svg class="a" style="left:1923.8px;top:349.8px" width="56" height="56" viewBox="0 0 24 24" ><path d="M14.4 6 14 4H5v17h2v-7h5.6l.4 2h7V6z" fill="#000"/></svg>
<div class="a" style="left:2017.2px;top:348.2px;width:59px;height:59px;border-radius:10px;border:2px solid #eaecf4"></div>
<svg class="a" style="left:2018.8px;top:349.8px" width="56" height="56" viewBox="0 0 24 24" ><path d="M5.68 19.74A10 10 0 0 0 11 21.95v-2.02a7.94 7.94 0 0 1-3.9-1.62m5.9 1.62v2.02c2-.2 3.84-1 5.32-2.21l-1.43-1.43c-1.1.86-2.43 1.44-3.89 1.62m5.31-3.03 1.43 1.43c1.21-1.48 2.01-3.33 2.21-5.33h-2.02a7.94 7.94 0 0 1-1.62 3.9M15 12a3 3 0 0 0-3-3 3 3 0 0 0-3 3 3 3 0 0 0 3 3 3 3 0 0 0 3-3M4.07 13H2.05c.2 2 1 3.84 2.21 5.32l1.43-1.43A7.87 7.87 0 0 1 4.07 13m1.62-5.9L4.26 5.68A10 10 0 0 0 2.05 11h2.02c.18-1.46.76-2.79 1.62-3.9M19.93 11h2.02c-.2-2-1-3.84-2.21-5.32L18.31 7.1a7.94 7.94 0 0 1 1.62 3.9m-1.61-6.74A10 10 0 0 0 13 2.05v2.02c1.46.18 2.79.76 3.9 1.62M11 4.07V2.05c-2 .2-3.84 1-5.32 2.21L7.1 5.69A7.94 7.94 0 0 1 11 4.07" fill="#000"/></svg>
<div class="a" style="left:2112.2px;top:348.2px;width:59px;height:59px;border-radius:10px;border:2px solid #eaecf4"></div>
<svg class="a" style="left:2113.8px;top:349.8px" width="56" height="56" viewBox="0 0 24 24" ><path d="M19 6H5c-1.1 0-2 .9-2 2v8c0 1.1.9 2 2 2h14c1.1 0 2-.9 2-2V8c0-1.1-.9-2-2-2zm0 10H5V8h14v8z" fill="#000"/></svg>
<div class="a" style="left:1162.2px;top:440.2px;width:59px;height:59px;border-radius:10px;border:2px solid #eaecf4"></div>
<svg class="a" style="left:1163.8px;top:443.1px" width="56" height="56" viewBox="0 0 24 24" ><path d="M10 7H8v4H4v2h4v4h2v-4h4v-2h-4V7zm10 11h-2V7.38L15 8.4V6.7L19.7 5h.3v13z" fill="#000"/></svg>
<div class="a" style="left:1257.2px;top:440.2px;width:59px;height:59px;border-radius:10px;border:2px solid #eaecf4"></div>
<svg class="a" style="left:1258.8px;top:441.8px" width="56" height="56" viewBox="0 0 24 24" ><path d="M12 18V6a6 6 0 0 1 6 6 6 6 0 0 1-6 6m8-2.69L23.31 12 20 8.69V4h-4.69L12 .69 8.69 4H4v4.69L.69 12 4 15.31V20h4.69L12 23.31 15.31 20H20z" fill="#000"/></svg>
<div class="a" style="left:1352.2px;top:440.2px;width:59px;height:59px;border-radius:10px;border:2px solid #eaecf4"></div>
<svg class="a" style="left:1353.8px;top:444.1px" width="56" height="56" viewBox="0 0 24 24" ><path d="M4 4h3l2-2h6l2 2h3a2 2 0 0 1 2 2v12a2 2 0 0 1-2 2H4a2 2 0 0 1-2-2V6a2 2 0 0 1 2-2m8 3a5 5 0 0 0-5 5 5 5 0 0 0 5 5 5 5 0 0 0 5-5 5 5 0 0 0-5-5m0 2a3 3 0 0 1 3 3 3 3 0 0 1-3 3 3 3 0 0 1-3-3 3 3 0 0 1 3-3" fill="#000"/></svg>
<div class="a" style="left:1447.2px;top:440.2px;width:59px;height:59px;border-radius:10px;border:2px solid #eaecf4"></div>
<svg class="a" style="left:1448.8px;top:441.8px" width="56" height="56" viewBox="0 0 24 24" ><path d="M21 11.5v-1c0-.8-.7-1.5-1.5-1.5H16v6h1.5v-2h1.1l.9 2H21l-.9-2.1c.5-.3.9-.8.9-1.4m-1.5 0h-2v-1h2zm-13-.5h-2V9H3v6h1.5v-2.5h2V15H8V9H6.5zM13 9H9.5v6H13c.8 0 1.5-.7 1.5-1.5v-3c0-.8-.7-1.5-1.5-1.5m0 4.5h-2v-3h2z" fill="#000"/></svg>
<div class="a" style="left:1542.2px;top:440.2px;width:59px;height:59px;border-radius:10px;border:2px solid #eaecf4"></div>
<svg class="a" style="left:1543.8px;top:441.8px" width="56" height="56" viewBox="0 0 24 24" ><path d="M19 3h-5v2h5v13l-5-6v9h5a2 2 0 0 0 2-2V5a2 2 0 0 0-2-2m-9 15H5l5-6m0-9H5c-1.11 0-2 .89-2 2v14a2 2 0 0 0 2 2h5v2h2V1h-2z" fill="#000"/></svg>
<div class="a" style="left:1637.2px;top:440.2px;width:59px;height:59px;border-radius:10px;border:2px solid #eaecf4"></div>
<svg class="a" style="left:1638.8px;top:441.8px" width="56" height="56" viewBox="0 0 24 24" ><path d="M7.47 21.5C4.2 19.93 1.86 16.76 1.5 13H0c.5 6.16 5.66 11 11.95 11 .23 0 .44 0 .66-.03L8.8 20.15zM12.05 0c-.23 0-.44 0-.66.04l3.81 3.81 1.33-1.35c3.27 1.57 5.61 4.74 5.97 8.5H24c-.5-6.16-5.66-11-11.95-11M16 14h2V8a2 2 0 0 0-2-2h-6v2h6zm-8 2V4H6v2H4v2h2v8a2 2 0 0 0 2 2h8v2h2v-2h2v-2z" fill="#000"/></svg>
<div class="a" style="left:1732.2px;top:440.2px;width:59px;height:59px;border-radius:10px;border:2px solid #eaecf4"></div>
<svg class="a" style="left:1733.8px;top:441.8px" width="56" height="56" viewBox="0 0 24 24" ><path d="m20.71 4.63-1.34-1.34c-.37-.39-1.02-.39-1.41 0L9 12.25 11.75 15l8.96-8.96c.39-.39.39-1.04 0-1.41M7 14a3 3 0 0 0-3 3c0 1.31-1.16 2-2 2 .92 1.22 2.5 2 4 2a4 4 0 0 0 4-4 3 3 0 0 0-3-3" fill="#000"/></svg>
<div class="a" style="left:1827.2px;top:440.2px;width:59px;height:59px;border-radius:10px;border:2px solid #eaecf4"></div>
<svg class="a" style="left:1828.8px;top:441.8px" width="56" height="56" viewBox="0 0 24 24" ><path d="m13.73 15-3.9 6.76a9.984 9.984 0 0 0 8.49-2.01l-3.66-6.35M2.46 15c.92 2.92 3.15 5.26 5.99 6.34L12.12 15m-3.58-3-3.9-6.75A9.86 9.86 0 0 0 2 12c0 .68.07 1.35.2 2h7.49m12.11-4h-7.49l.29.5 4.76 8.25A9.93 9.93 0 0 0 22 12c0-.69-.07-1.36-.2-2m-.26-1c-.92-2.93-3.15-5.26-5.99-6.34L11.88 9M9.4 10.5l4.77-8.26C13.47 2.09 12.75 2 12 2c-2.4 0-4.6.84-6.32 2.25l3.66 6.35z" fill="#000"/></svg>
<div class="a" style="left:1922.2px;top:440.2px;width:59px;height:59px;border-radius:10px;border:2px solid #eaecf4"></div>
<svg class="a" style="left:1923.8px;top:441.8px" width="56" height="56" viewBox="0 0 24 24" ><path d="M6.92 19 5 17.08 13.06 9 15 10.94m5.71-5.31-2.34-2.34c-.37-.39-1.02-.39-1.41 0l-3.12 3.12-1.93-1.91-1.41 1.41 1.42 1.42L3 16.25V21h4.75l8.92-8.92 1.42 1.42 1.41-1.41-1.92-1.92 3.12-3.12c.4-.4.4-1.05.01-1.42" fill="#000"/></svg>
<div class="a" style="left:2017.2px;top:440.2px;width:59px;height:59px;border-radius:10px;border:2px solid #eaecf4"></div>
<svg class="a" style="left:2018.8px;top:441.8px" width="56" height="56" viewBox="0 0 24 24" ><path d="M19 7H5c-1.1 0-2 .9-2 2v6c0 1.1.9 2 2 2h14c1.1 0 2-.9 2-2V9c0-1.1-.9-2-2-2zm0 8H5V9h14v6z" fill="#000"/></svg>
<div class="a" style="left:2112.2px;top:440.2px;width:59px;height:59px;border-radius:10px;border:2px solid #eaecf4"></div>
<svg class="a" style="left:2113.8px;top:441.8px" width="56" height="56" viewBox="0 0 24 24" ><path d="M20.71 7.04c.39-.39.39-1.04 0-1.41l-2.34-2.34c-.37-.39-1.02-.39-1.41 0l-1.84 1.83 3.75 3.75M3 17.25V21h3.75L17.81 9.93l-3.75-3.75z" fill="#000"/></svg>
<div class="a" style="left:1162.2px;top:532.2px;width:59px;height:59px;border-radius:10px;border:2px solid #eaecf4"></div>
<svg class="a" style="left:1163.8px;top:533.8px" width="56" height="56" viewBox="0 0 24 24" ><path d="M4 6H2v14c0 1.1.9 2 2 2h14v-2H4zm16-4H8c-1.1 0-2 .9-2 2v12c0 1.1.9 2 2 2h12c1.1 0 2-.9 2-2V4c0-1.1-.9-2-2-2m0 10-2.5-1.5L15 12V4h5z" fill="#000"/></svg>
<div class="a" style="left:1257.2px;top:532.2px;width:59px;height:59px;border-radius:10px;border:2px solid #eaecf4"></div>
<svg class="a" style="left:1258.8px;top:533.8px" width="56" height="56" viewBox="0 0 24 24" ><path d="M19 3h-4v2h4v4h2V5a2 2 0 0 0-2-2m0 16h-4v2h4a2 2 0 0 0 2-2v-4h-2M5 15H3v4a2 2 0 0 0 2 2h4v-2H5M3 5v4h2V5h4V3H5a2 2 0 0 0-2 2" fill="#000"/></svg>
<div class="a" style="left:1352.2px;top:532.2px;width:59px;height:59px;border-radius:10px;border:2px solid #eaecf4"></div>
<svg class="a" style="left:1355.1px;top:535.1px" width="56" height="56" viewBox="0 0 24 24" ><path d="M4 11v2h8v-2H4zm15 7h-2V7.38L14 8.4V6.7L18.7 5h.3v13z" fill="#000"/></svg>
<div class="a" style="left:1447.2px;top:532.2px;width:59px;height:59px;border-radius:10px;border:2px solid #eaecf4"></div>
<svg class="a" style="left:1448.8px;top:533.8px" width="56" height="56" viewBox="0 0 24 24" ><path d="M21 17H7V3h14m0-2H7a2 2 0 0 0-2 2v14a2 2 0 0 0 2 2h14a2 2 0 0 0 2-2V3a2 2 0 0 0-2-2m-7 14h2V5h-4v2h2M3 5H1v16a2 2 0 0 0 2 2h16v-2H3z" fill="#000"/></svg>
<div class="a" style="left:1542.2px;top:532.2px;width:59px;height:59px;border-radius:10px;border:2px solid #eaecf4"></div>
<svg class="a" style="left:1543.8px;top:533.8px" width="56" height="56" viewBox="0 0 24 24" ><path d="M13 11h2v2h-2m0-6h2v2h-2m0 6h2a2 2 0 0 0 2-2v-1.5a1.5 1.5 0 0 0-1.5-1.5A1.5 1.5 0 0 0 17 8.5V7a2 2 0 0 0-2-2h-2a2 2 0 0 0-2 2v1.5a1.5 1.5 0 0 0 1.5 1.5 1.5 1.5 0 0 0-1.5 1.5V13a2 2 0 0 0 2 2m8 2H7V3h14m0-2H7a2 2 0 0 0-2 2v14a2 2 0 0 0 2 2h14a2 2 0 0 0 2-2V3a2 2 0 0 0-2-2M3 5H1v16a2 2 0 0 0 2 2h16v-2H3z" fill="#000"/></svg>
<div class="a" style="left:1637.2px;top:532.2px;width:59px;height:59px;border-radius:10px;border:2px solid #eaecf4"></div>
<svg class="a" style="left:1638.8px;top:536.1px" width="56" height="56" viewBox="0 0 24 24" ><path d="M18 8H6v10h12m2 2H4V6h4.5l3.54-3.5L15.5 6H20m0-2h-4l-4-4-4 4H4a2 2 0 0 0-2 2v14a2 2 0 0 0 2 2h16a2 2 0 0 0 2-2V6a2 2 0 0 0-2-2" fill="#000"/></svg>
<div class="a" style="left:1732.2px;top:532.2px;width:59px;height:59px;border-radius:10px;border:2px solid #eaecf4"></div>
<svg class="a" style="left:1732.3px;top:532.3px" width="56" height="56" viewBox="0 0 24 24" ><path d="M16.85 7.65 18 4l1.15 3.65M19 2h-2l-3.2 9h1.9l.7-2h3.2l.7 2h1.9M3 2v12h3v9l7-12H9l4-9z" fill="#000"/></svg>
<div class="a" style="left:1827.2px;top:532.2px;width:59px;height:59px;border-radius:10px;border:2px solid #eaecf4"></div>
<svg class="a" style="left:1828.8px;top:533.8px" width="56" height="56" viewBox="0 0 24 24" ><path d="M10 12a2 2 0 0 0-2 2 2 2 0 0 0 2 2 2 2 0 0 0 2-2 2 2 0 0 0-2-2M6 8a2 2 0 0 0-2 2 2 2 0 0 0 2 2 2 2 0 0 0 2-2 2 2 0 0 0-2-2m0 8a2 2 0 0 0-2 2 2 2 0 0 0 2 2 2 2 0 0 0 2-2 2 2 0 0 0-2-2m12-8a2 2 0 0 0 2-2 2 2 0 0 0-2-2 2 2 0 0 0-2 2 2 2 0 0 0 2 2m-4 8a2 2 0 0 0-2 2 2 2 0 0 0 2 2 2 2 0 0 0 2-2 2 2 0 0 0-2-2m4-4a2 2 0 0 0-2 2 2 2 0 0 0 2 2 2 2 0 0 0 2-2 2 2 0 0 0-2-2m-4-4a2 2 0 0 0-2 2 2 2 0 0 0 2 2 2 2 0 0 0 2-2 2 2 0 0 0-2-2m-4-4a2 2 0 0 0-2 2 2 2 0 0 0 2 2 2 2 0 0 0 2-2 2 2 0 0 0-2-2" fill="#000"/></svg>
<div class="a" style="left:1922.2px;top:532.2px;width:59px;height:59px;border-radius:10px;border:2px solid #eaecf4"></div>
<svg class="a" style="left:1923.8px;top:533.8px" width="56" height="56" viewBox="0 0 24 24" ><path d="M12 2A10 10 0 0 0 2 12a10 10 0 0 0 10 10 10 10 0 0 0 10-10A10 10 0 0 0 12 2" fill="#000"/></svg>
<div class="a" style="left:2017.2px;top:532.2px;width:59px;height:59px;border-radius:10px;border:2px solid #eaecf4"></div>
<svg class="a" style="left:2018.8px;top:533.8px" width="56" height="56" viewBox="0 0 24 24" ><path d="M21 17H7V3h14m0-2H7a2 2 0 0 0-2 2v14a2 2 0 0 0 2 2h14a2 2 0 0 0 2-2V3a2 2 0 0 0-2-2m-6 14h2V5h-2v4h-2V5h-2v6h4M3 5H1v16a2 2 0 0 0 2 2h16v-2H3z" fill="#000"/></svg>
<div class="a" style="left:2112.2px;top:532.2px;width:59px;height:59px;border-radius:10px;border:2px solid #eaecf4"></div>
<svg class="a" style="left:2113.8px;top:533.8px" width="56" height="56" viewBox="0 0 24 24" ><path d="M15 9h-2V7h2m0-2h-2a2 2 0 0 0-2 2v2a2 2 0 0 0 2 2h2v2h-4v2h4a2 2 0 0 0 2-2V7a2 2 0 0 0-2-2m6 12H7V3h14m0-2H7a2 2 0 0 0-2 2v14a2 2 0 0 0 2 2h14a2 2 0 0 0 2-2V3a2 2 0 0 0-2-2M3 5H1v16a2 2 0 0 0 2 2h16v-2H3z" fill="#000"/></svg>
<div class="a" style="left:1162.2px;top:624.3px;width:59px;height:59px;border-radius:10px;border:2px solid #eaecf4"></div>
<svg class="a" style="left:1167.3px;top:625.9px" width="56" height="56" viewBox="0 0 24 24" ><path d="M3.27 3L2 4.27l5 5V13h3v9l3.58-6.14L17.73 20 19 18.73 3.27 3zM17 10h-4l4-8H7v2.18l8.46 8.46L17 10z" fill="#000"/></svg>
<div class="a" style="left:1257.2px;top:624.3px;width:59px;height:59px;border-radius:10px;border:2px solid #eaecf4"></div>
<svg class="a" style="left:1258.8px;top:625.9px" width="56" height="56" viewBox="0 0 24 24" ><path d="M16 10h-2v2h2v-2zm0 4h-2v2h2v-2zm-8-4H6v2h2v-2zm4 0h-2v2h2v-2zm8-6H4c-1.1 0-2 .9-2 2v12c0 1.1.9 2 2 2h16c1.1 0 2-.9 2-2V6c0-1.1-.9-2-2-2zm0 14H4V6h16v12z" fill="#000"/></svg>
<div class="a" style="left:1352.2px;top:624.3px;width:59px;height:59px;border-radius:10px;border:2px solid #eaecf4"></div>
<svg class="a" style="left:1353.8px;top:625.9px" width="56" height="56" viewBox="0 0 24 24" ><path d="M5 15H3v4c0 1.1.9 2 2 2h4v-2H5v-4zM5 5h4V3H5c-1.1 0-2 .9-2 2v4h2V5zm14-2h-4v2h4v4h2V5c0-1.1-.9-2-2-2zm0 16h-4v2h4c1.1 0 2-.9 2-2v-4h-2v4zM12 9.2a2.8 2.8 0 100 5.6 2.8 2.8 0 000-5.6z" fill="#000"/></svg>
<div class="a" style="left:1447.2px;top:624.3px;width:59px;height:59px;border-radius:10px;border:2px solid #eaecf4"></div>
<svg class="a" style="left:1448.8px;top:625.9px" width="56" height="56" viewBox="0 0 24 24" ><path d="M12 16a4 4 0 0 1-4-4 4 4 0 0 1 4-4 4 4 0 0 1 4 4 4 4 0 0 1-4 4m6.7-3.6a6 6 0 0 0-.86-.4c.29-.11.58-.24.86-.4 1.92-1.1 2.99-3.1 3-5.19a6.01 6.01 0 0 0-6 0c-.28.16-.54.35-.78.54.05-.31.08-.63.08-.95 0-2.22-1.21-4.15-3-5.19C10.21 1.85 9 3.78 9 6c0 .32.03.64.08.95-.24-.2-.5-.39-.78-.55a6.01 6.01 0 0 0-6 0c0 2.07 1.07 4.1 3 5.19.28.16.57.29.86.41-.29.1-.58.23-.86.39a6 6 0 0 0-3 5.19 6.01 6.01 0 0 0 6 0c.28-.16.54-.35.78-.54-.05.32-.08.64-.08.96 0 2.22 1.21 4.15 3 5.19 1.79-1.04 3-2.97 3-5.19 0-.32-.03-.64-.08-.95q.36.3.78.54a6.01 6.01 0 0 0 6 0c-.01-2.09-1.08-4.09-3-5.19" fill="#000"/></svg>
<div class="a" style="left:1542.2px;top:624.3px;width:59px;height:59px;border-radius:10px;border:2px solid #eaecf4"></div>
<svg class="a" style="left:1543.8px;top:625.9px" width="56" height="56" viewBox="0 0 24 24" ><path d="m8.5 13.5 2.5 3 3.5-4.5 4.5 6H5m16 1V5a2 2 0 0 0-2-2H5a2 2 0 0 0-2 2v14a2 2 0 0 0 2 2h14a2 2 0 0 0 2-2" fill="#000"/></svg>
<div class="a" style="left:1637.2px;top:624.3px;width:59px;height:59px;border-radius:10px;border:2px solid #eaecf4"></div>
<svg class="a" style="left:1638.8px;top:625.9px" width="56" height="56" viewBox="0 0 24 24" ><path d="m14 6-3.75 5 2.85 3.8-1.6 1.2C9.81 13.75 7 10 7 10l-6 8h22z" fill="#000"/></svg>
<div class="a" style="left:1732.2px;top:624.3px;width:59px;height:59px;border-radius:10px;border:2px solid #eaecf4"></div>
<svg class="a" style="left:1733.8px;top:625.9px" width="56" height="56" viewBox="0 0 24 24" ><path d="M0 2.77 1.28 1.5 22.5 22.72 21.23 24l-2-2H4c-1.08 0-2-.9-2-2V4.77zM10 4v3.68l-2-2V4H6.32l-2-2H20a2 2 0 0 1 2 2v15.7l-2-2V16h-1.68l-2-2H20v-4h-4v3.68l-2-2V10h-1.68l-2-2H14V4zm6 0v4h4V4zm0 16h1.23L16 18.77zM4 8h1.23L4 6.77zm6 6h1.23L10 12.77zm4 6v-3.23l-.77-.77H10v4zm-6 0v-4H4v4zm0-6v-3.23L7.23 10H4v4z" fill="#000"/></svg>
<div class="a" style="left:1827.2px;top:624.3px;width:59px;height:59px;border-radius:10px;border:2px solid #eaecf4"></div>
<svg class="a" style="left:1828.8px;top:625.9px" width="56" height="56" viewBox="0 0 24 24" ><path d="M5 8c-2.21 0-4 1.79-4 4s1.79 4 4 4 4-1.79 4-4-1.79-4-4-4zm12-2c-3.31 0-6 2.69-6 6s2.69 6 6 6 6-2.69 6-6-2.69-6-6-6zm0 10c-2.21 0-4-1.79-4-4s1.79-4 4-4 4 1.79 4 4-1.79 4-4 4z" fill="#000"/></svg>
<div class="a" style="left:1922.2px;top:624.3px;width:59px;height:59px;border-radius:10px;border:2px solid #eaecf4"></div>
<svg class="a" style="left:1923.8px;top:625.9px" width="56" height="56" viewBox="0 0 24 24" ><path d="M15 10.5a1.5 1.5 0 0 1-1.5 1.5c.84 0 1.5.67 1.5 1.5V15c0 1.11-.89 2-2 2H9v-2h4v-2h-2v-2h2V9H9V7h4c1.11 0 2 .89 2 2m4-6H5c-1.09 0-2 .9-2 2v14a2 2 0 0 0 2 2h14a2 2 0 0 0 2-2V5a2 2 0 0 0-2-2" fill="#000"/></svg>
<div class="a" style="left:2017.2px;top:624.3px;width:59px;height:59px;border-radius:10px;border:2px solid #eaecf4"></div>
<svg class="a" style="left:2018.8px;top:625.9px" width="56" height="56" viewBox="0 0 24 24" ><path d="M21 17H7V3h14m0-2H7a2 2 0 0 0-2 2v14a2 2 0 0 0 2 2h14a2 2 0 0 0 2-2V3a2 2 0 0 0-2-2M3 5H1v16a2 2 0 0 0 2 2h16v-2H3m12.96-10.71-2.75 3.54-1.96-2.36L8.5 15h11z" fill="#000"/></svg>
<div class="a" style="left:2112.2px;top:624.3px;width:59px;height:59px;border-radius:10px;border:2px solid #eaecf4"></div>
<svg class="a" style="left:2113.8px;top:625.9px" width="56" height="56" viewBox="0 0 24 24" ><path d="m14 6-3.75 5 2.85 3.8-1.6 1.2C9.81 13.75 7 10 7 10l-6 8h22z" fill="#000"/></svg>
<div class="a" style="left:1162.2px;top:716.4px;width:59px;height:59px;border-radius:10px;border:2px solid #eaecf4"></div>
<svg class="a" style="left:1163.8px;top:718.0px" width="56" height="56" viewBox="0 0 24 24" ><path d="M15 17h-2v-4H9V7h2v4h2V7h2m4-4H5a2 2 0 0 0-2 2v14a2 2 0 0 0 2 2h14a2 2 0 0 0 2-2V5a2 2 0 0 0-2-2" fill="#000"/></svg>
<div class="a" style="left:1257.2px;top:716.4px;width:59px;height:59px;border-radius:10px;border:2px solid #eaecf4"></div>
<svg class="a" style="left:1258.8px;top:718.0px" width="56" height="56" viewBox="0 0 24 24" ><path d="M10 3H8c0 .37-.04.72-.12 1.06l1.59 1.59C9.81 4.84 10 3.94 10 3M3 4.27l2.84 2.84C5.03 7.67 4.06 8 3 8v2c1.61 0 3.09-.55 4.27-1.46L8.7 9.97A9 9 0 0 1 3 12v2c2.71 0 5.19-1 7.11-2.62l2.5 2.5C11 15.81 10 18.29 10 21h2c0-2.16.76-4.14 2.03-5.69l1.43 1.43A6.92 6.92 0 0 0 14 21h2c0-1.06.33-2.03.89-2.84L19.73 21 21 19.73 4.27 3zM14 3h-2c0 1.5-.37 2.91-1 4.16l1.44 1.46C13.42 7 14 5.06 14 3m5.94 13.12c.34-.08.69-.12 1.06-.12v-2c-.94 0-1.84.19-2.66.5zm-4.56-4.56L16.84 13c1.25-.63 2.66-1 4.16-1v-2c-2.06 0-4 .58-5.62 1.56" fill="#000"/></svg>
<div class="a" style="left:1352.2px;top:716.4px;width:59px;height:59px;border-radius:10px;border:2px solid #eaecf4"></div>
<svg class="a" style="left:1353.8px;top:718.0px" width="56" height="56" viewBox="0 0 24 24" ><path d="M15 9h-4v2h2a2 2 0 0 1 2 2v2a2 2 0 0 1-2 2h-2a2 2 0 0 1-2-2V9a2 2 0 0 1 2-2h4m4-4H5a2 2 0 0 0-2 2v14a2 2 0 0 0 2 2h14a2 2 0 0 0 2-2V5a2 2 0 0 0-2-2m-8 12h2v-2h-2z" fill="#000"/></svg>
<div class="a" style="left:1447.2px;top:716.4px;width:59px;height:59px;border-radius:10px;border:2px solid #eaecf4"></div>
<svg class="a" style="left:1448.8px;top:718.0px" width="56" height="56" viewBox="0 0 24 24" ><path d="M15.41 16.58 10.83 12l4.58-4.59L14 6l-6 6 6 6z" fill="#000"/></svg>
<div class="a" style="left:1542.2px;top:716.4px;width:59px;height:59px;border-radius:10px;border:2px solid #eaecf4"></div>
<svg class="a" style="left:1543.8px;top:718.0px" width="56" height="56" viewBox="0 0 24 24" ><path d="M12 6A11 11 0 0 0 1 17h2c0-4.96 4.04-9 9-9s9 4.04 9 9h2A11 11 0 0 0 12 6m0 4c-3.86 0-7 3.14-7 7h2a5 5 0 0 1 5-5 5 5 0 0 1 5 5h2c0-3.86-3.14-7-7-7" fill="#000"/></svg>
<div class="a" style="left:1637.2px;top:716.4px;width:59px;height:59px;border-radius:10px;border:2px solid #eaecf4"></div>
<svg class="a" style="left:1638.8px;top:718.0px" width="56" height="56" viewBox="0 0 24 24" ><path d="M21.43 4c-.1 0-.2 0-.31.06C18.18 5.16 15.09 5.7 12 5.7s-6.18-.55-9.12-1.64C2.77 4 2.66 4 2.57 4c-.34 0-.57.23-.57.63v14.75c0 .39.23.62.57.62.1 0 .2 0 .31-.06 2.94-1.1 6.03-1.64 9.12-1.64s6.18.55 9.12 1.64c.11.06.21.06.31.06.33 0 .57-.23.57-.63V4.63c0-.4-.24-.63-.57-.63M20 6.54v10.91c-2.6-.77-5.28-1.16-8-1.16s-5.4.39-8 1.16V6.54c2.6.77 5.28 1.16 8 1.16 2.72.01 5.4-.38 8-1.16" fill="#000"/></svg>
<div class="a" style="left:1732.2px;top:716.4px;width:59px;height:59px;border-radius:10px;border:2px solid #eaecf4"></div>
<svg class="a" style="left:1733.8px;top:718.0px" width="56" height="56" viewBox="0 0 24 24" ><path d="M7 11H1v2h6zm2.17-3.24L7.05 5.64 5.64 7.05l2.12 2.12zM13 1h-2v6h2zm5.36 6.05-1.41-1.41-2.12 2.12 1.41 1.41zM17 11v2h6v-2zm-5-2a3 3 0 0 0-3 3 3 3 0 0 0 3 3 3 3 0 0 0 3-3 3 3 0 0 0-3-3m2.83 7.24 2.12 2.12 1.41-1.41-2.12-2.12zm-9.19.71 1.41 1.41 2.12-2.12-1.41-1.41zM11 23h2v-6h-2z" fill="#000"/></svg>
<div class="a" style="left:1827.2px;top:716.4px;width:59px;height:59px;border-radius:10px;border:2px solid #eaecf4"></div>
<svg class="a" style="left:1828.8px;top:718.0px" width="56" height="56" viewBox="0 0 24 24" ><path d="M19 19H5V5h14m0-2H5a2 2 0 0 0-2 2v14a2 2 0 0 0 2 2h14a2 2 0 0 0 2-2V5a2 2 0 0 0-2-2m-9 5v8l5-4z" fill="#000"/></svg>
<div class="a" style="left:1922.2px;top:716.4px;width:59px;height:59px;border-radius:10px;border:2px solid #eaecf4"></div>
<svg class="a" style="left:1923.8px;top:718.0px" width="56" height="56" viewBox="0 0 24 24" ><path d="m18 4 2 4h-3l-2-4h-2l2 4h-3l-2-4H8l2 4H7L5 4H4a2 2 0 0 0-2 2v12a2 2 0 0 0 2 2h16a2 2 0 0 0 2-2V4z" fill="#000"/></svg>
<div class="a" style="left:2017.2px;top:716.4px;width:59px;height:59px;border-radius:10px;border:2px solid #eaecf4"></div>
<svg class="a" style="left:2018.8px;top:718.0px" width="56" height="56" viewBox="0 0 24 24" ><path d="M19 19H5V5h14m0-2H5a2 2 0 0 0-2 2v14a2 2 0 0 0 2 2h14a2 2 0 0 0 2-2V5a2 2 0 0 0-2-2m-2.5 13.25c0-1.5-3-2.25-4.5-2.25s-4.5.75-4.5 2.25V17h9M12 12.25A2.25 2.25 0 0 0 14.25 10 2.25 2.25 0 0 0 12 7.75 2.25 2.25 0 0 0 9.75 10 2.25 2.25 0 0 0 12 12.25" fill="#000"/></svg>
<div class="a" style="left:2112.2px;top:716.4px;width:59px;height:59px;border-radius:10px;border:2px solid #eaecf4"></div>
<svg class="a" style="left:2113.8px;top:718.0px" width="56" height="56" viewBox="0 0 24 24" ><path d="M12 3v10.55c-.59-.34-1.27-.55-2-.55-2.21 0-4 1.79-4 4s1.79 4 4 4 4-1.79 4-4V7h4V3z" fill="#000"/></svg>
<div class="a" style="left:1162.2px;top:808.4px;width:59px;height:59px;border-radius:10px;border:2px solid #eaecf4"></div>
<svg class="a" style="left:1163.8px;top:812.3px" width="56" height="56" viewBox="0 0 24 24" ><path d="M4 4h3l2-2h6l2 2h3a2 2 0 0 1 2 2v12a2 2 0 0 1-2 2H4a2 2 0 0 1-2-2V6a2 2 0 0 1 2-2m8 3a5 5 0 0 0-5 5 5 5 0 0 0 5 5 5 5 0 0 0 5-5 5 5 0 0 0-5-5m0 2a3 3 0 0 1 3 3 3 3 0 0 1-3 3 3 3 0 0 1-3-3 3 3 0 0 1 3-3" fill="#000"/></svg>
<div class="a" style="left:1257.2px;top:808.4px;width:59px;height:59px;border-radius:10px;border:2px solid #eaecf4"></div>
<svg class="a" style="left:1258.8px;top:810.0px" width="56" height="56" viewBox="0 0 24 24" ><path d="m8.5 13.5 2.5 3 3.5-4.5 4.5 6H5m16 1V5a2 2 0 0 0-2-2H5a2 2 0 0 0-2 2v14a2 2 0 0 0 2 2h14a2 2 0 0 0 2-2" fill="#000"/></svg>
<div class="a" style="left:1352.2px;top:808.4px;width:59px;height:59px;border-radius:10px;border:2px solid #eaecf4"></div>
<svg class="a" style="left:1353.8px;top:810.0px" width="56" height="56" viewBox="0 0 24 24" ><path d="M22 18v-2H8V4h2L7 1 4 4h2v2H2v2h4v8c0 1.1.9 2 2 2h8v2h-2l3 3 3-3h-2v-2h4zM10 8h6v6h2V8c0-1.1-.9-2-2-2h-6v2z" fill="#000"/></svg>
<div class="a" style="left:1447.2px;top:808.4px;width:59px;height:59px;border-radius:10px;border:2px solid #eaecf4"></div>
<svg class="a" style="left:1448.8px;top:810.0px" width="56" height="56" viewBox="0 0 24 24" ><path d="m8.5 12.5 2.5 3 3.5-4.5 4.5 6H5m18 1V6a2 2 0 0 0-2-2H3a2 2 0 0 0-2 2v12a2 2 0 0 0 2 2h18a2 2 0 0 0 2-2" fill="#000"/></svg>
<div class="a" style="left:1542.2px;top:808.4px;width:59px;height:59px;border-radius:10px;border:2px solid #eaecf4"></div>
<svg class="a" style="left:1543.8px;top:810.0px" width="56" height="56" viewBox="0 0 24 24" ><path d="M12 9a3 3 0 0 0-3 3 3 3 0 0 0 3 3 3 3 0 0 0 3-3 3 3 0 0 0-3-3m0 8a5 5 0 0 1-5-5 5 5 0 0 1 5-5 5 5 0 0 1 5 5 5 5 0 0 1-5 5m0-12.5C7 4.5 2.73 7.61 1 12c1.73 4.39 6 7.5 11 7.5s9.27-3.11 11-7.5c-1.73-4.39-6-7.5-11-7.5" fill="#000"/></svg>
<div class="a" style="left:1637.2px;top:808.4px;width:59px;height:59px;border-radius:10px;border:2px solid #eaecf4"></div>
<svg class="a" style="left:1638.8px;top:810.0px" width="56" height="56" viewBox="0 0 24 24" ><path d="M9.29 21h2.83L21 12.12V9.29M19 21c.55 0 1.05-.22 1.41-.59.37-.36.59-.86.59-1.41v-2l-4 4M5 3a2 2 0 0 0-2 2v2l4-4m4.88 0L3 11.88v2.83L14.71 3m4.79.08L3.08 19.5c.09.35.27.66.51.91.25.24.56.42.91.51L20.93 4.5c-.19-.7-.73-1.24-1.43-1.42" fill="#000"/></svg>
<div class="a" style="left:1732.2px;top:808.4px;width:59px;height:59px;border-radius:10px;border:2px solid #eaecf4"></div>
<svg class="a" style="left:1733.8px;top:810.0px" width="56" height="56" viewBox="0 0 24 24" ><path d="M19.36 10.04C18.67 6.59 15.64 4 12 4 9.11 4 6.6 5.64 5.35 8.04 2.34 8.36 0 10.91 0 14c0 3.31 2.69 6 6 6h13c2.76 0 5-2.24 5-5 0-2.64-2.05-4.78-4.64-4.96z" fill="#000"/></svg>
<div class="a" style="left:1827.2px;top:808.4px;width:59px;height:59px;border-radius:10px;border:2px solid #eaecf4"></div>
<svg class="a" style="left:1828.8px;top:810.0px" width="56" height="56" viewBox="0 0 24 24" ><path d="M17.5 12a1.5 1.5 0 0 1-1.5-1.5A1.5 1.5 0 0 1 17.5 9a1.5 1.5 0 0 1 1.5 1.5 1.5 1.5 0 0 1-1.5 1.5m-3-4A1.5 1.5 0 0 1 13 6.5 1.5 1.5 0 0 1 14.5 5 1.5 1.5 0 0 1 16 6.5 1.5 1.5 0 0 1 14.5 8m-5 0A1.5 1.5 0 0 1 8 6.5 1.5 1.5 0 0 1 9.5 5 1.5 1.5 0 0 1 11 6.5 1.5 1.5 0 0 1 9.5 8m-3 4A1.5 1.5 0 0 1 5 10.5 1.5 1.5 0 0 1 6.5 9 1.5 1.5 0 0 1 8 10.5 1.5 1.5 0 0 1 6.5 12M12 3a9 9 0 0 0-9 9 9 9 0 0 0 9 9 1.5 1.5 0 0 0 1.5-1.5c0-.39-.15-.74-.39-1-.23-.27-.38-.62-.38-1a1.5 1.5 0 0 1 1.5-1.5H16a5 5 0 0 0 5-5c0-4.42-4.03-8-9-8" fill="#000"/></svg>
<div class="a" style="left:1922.2px;top:808.4px;width:59px;height:59px;border-radius:10px;border:2px solid #eaecf4"></div>
<svg class="a" style="left:1923.8px;top:810.0px" width="56" height="56" viewBox="0 0 24 24" ><path d="m6 19 3-3.86 2.14 2.58 3-3.86L18 19zM6 4h5v8l-2.5-1.5L6 12M18 2H6a2 2 0 0 0-2 2v16a2 2 0 0 0 2 2h12a2 2 0 0 0 2-2V4a2 2 0 0 0-2-2" fill="#000"/></svg>
<div class="a" style="left:2017.2px;top:808.4px;width:59px;height:59px;border-radius:10px;border:2px solid #eaecf4"></div>
<svg class="a" style="left:2017.4px;top:813.3px" width="56" height="56" viewBox="0 0 24 24" ><path d="m16.89 15.5 1.42 1.39c.9-1.16 1.45-2.5 1.62-3.89h-2.02c-.14.87-.48 1.72-1.02 2.5M13 17.9v2.02c1.39-.17 2.74-.71 3.9-1.61l-1.44-1.44c-.75.54-1.59.89-2.46 1.03m6.93-6.9a7.9 7.9 0 0 0-1.62-3.89l-1.42 1.42c.54.75.88 1.6 1.02 2.47m-2.36-5.45L11 1v3.07C7.06 4.56 4 7.92 4 12s3.05 7.44 7 7.93v-2.02c-2.84-.48-5-2.94-5-5.91s2.16-5.43 5-5.91V10z" fill="#000"/></svg>
<div class="a" style="left:2112.2px;top:808.4px;width:59px;height:59px;border-radius:10px;border:2px solid #eaecf4"></div>
<svg class="a" style="left:2113.8px;top:810.0px" width="56" height="56" viewBox="0 0 24 24" ><path d="M13 15.5V13H7v2.5L3.5 12 7 8.5V11h6V8.5l3.5 3.5M18 9.5V6a1 1 0 0 0-1-1H3a1 1 0 0 0-1 1v12a1 1 0 0 0 1 1h14a1 1 0 0 0 1-1v-3.5l4 4v-13z" fill="#000"/></svg>
<div class="a" style="left:1162.2px;top:900.5px;width:59px;height:59px;border-radius:10px;border:2px solid #eaecf4"></div>
<svg class="a" style="left:1163.8px;top:902.1px" width="56" height="56" viewBox="0 0 24 24" ><path d="M12 20a7 7 0 0 1-7-7c0-1.28.35-2.5.95-3.5l9.55 9.54c-1 .61-2.22.96-3.5.96M3 4 1.75 5.27 4.5 8.03A8.9 8.9 0 0 0 3 13a9 9 0 0 0 9 9c1.84 0 3.55-.55 5-1.5l2.5 2.5 1.25-1.27L13.04 14zm8 5.44 2 2V8h-2m4-7H9v2h6m4.04 1.55-1.42 1.42A9 9 0 0 0 12 4c-1.83 0-3.53.55-4.95 1.5L8.5 6.94C9.53 6.35 10.73 6 12 6a7 7 0 0 1 7 7c0 1.27-.35 2.47-.94 3.5l1.44 1.44c.95-1.41 1.5-3.11 1.5-4.94 0-2.12-.74-4.07-1.97-5.61l1.42-1.42z" fill="#000"/></svg>
<div class="a" style="left:1257.2px;top:900.5px;width:59px;height:59px;border-radius:10px;border:2px solid #eaecf4"></div>
<svg class="a" style="left:1258.8px;top:902.1px" width="56" height="56" viewBox="0 0 24 24" ><path d="M3 17v2h6v-2zM3 5v2h10V5zm10 16v-2h8v-2h-8v-2h-2v6zM7 9v2H3v2h4v2h2V9zm14 4v-2H11v2zm-6-4h2V7h4V5h-4V3h-2z" fill="#000"/></svg>
<div class="a" style="left:1352.2px;top:900.5px;width:59px;height:59px;border-radius:10px;border:2px solid #eaecf4"></div>
<svg class="a" style="left:1353.8px;top:904.4px" width="56" height="56" viewBox="0 0 24 24" ><path d="M15 15.5V13H9v2.5L5.5 12 9 8.5V11h6V8.5l3.5 3.5M20 4h-3.17L15 2H9L7.17 4H4a2 2 0 0 0-2 2v12a2 2 0 0 0 2 2h16a2 2 0 0 0 2-2V6a2 2 0 0 0-2-2" fill="#000"/></svg>
<div class="a" style="left:1447.2px;top:900.5px;width:59px;height:59px;border-radius:10px;border:2px solid #eaecf4"></div>
<svg class="a" style="left:1448.8px;top:902.1px" width="56" height="56" viewBox="0 0 24 24" ><path d="M12 17.5c2.33 0 4.3-1.46 5.11-3.5H6.89c.8 2.04 2.78 3.5 5.11 3.5M8.5 11A1.5 1.5 0 0 0 10 9.5 1.5 1.5 0 0 0 8.5 8 1.5 1.5 0 0 0 7 9.5 1.5 1.5 0 0 0 8.5 11m7 0A1.5 1.5 0 0 0 17 9.5 1.5 1.5 0 0 0 15.5 8 1.5 1.5 0 0 0 14 9.5a1.5 1.5 0 0 0 1.5 1.5M12 20a8 8 0 0 1-8-8 8 8 0 0 1 8-8 8 8 0 0 1 8 8 8 8 0 0 1-8 8m0-18C6.47 2 2 6.5 2 12a10 10 0 0 0 10 10 10 10 0 0 0 10-10A10 10 0 0 0 12 2" fill="#000"/></svg>
<div class="a" style="left:1542.2px;top:900.5px;width:59px;height:59px;border-radius:10px;border:2px solid #eaecf4"></div>
<svg class="a" style="left:1543.8px;top:902.1px" width="56" height="56" viewBox="0 0 24 24" ><path d="m10.3 16-.7-2H6.4l-.7 2H3.8L7 7h2l3.2 9M22 7l-1.2 6.29L19.3 7h-1.6l-1.49 6.29L15 7h-.76C12.77 5.17 10.5 4 8 4a8 8 0 0 0-8 8 8 8 0 0 0 8 8c3.13 0 5.84-1.81 7.15-4.43l.1.43H17l1.5-6.1L20 16h1.75l2.05-9M6.85 12.65h2.3L8 9z" fill="#000"/></svg>
<div class="a" style="left:1637.2px;top:900.5px;width:59px;height:59px;border-radius:10px;border:2px solid #eaecf4"></div>
<svg class="a" style="left:1638.8px;top:902.1px" width="56" height="56" viewBox="0 0 24 24" ><path d="M12 20a8 8 0 0 1-8-8 8 8 0 0 1 8-8 8 8 0 0 1 8 8 8 8 0 0 1-8 8m0-18A10 10 0 0 0 2 12a10 10 0 0 0 10 10 10 10 0 0 0 10-10A10 10 0 0 0 12 2m4.24 5.76A5.95 5.95 0 0 0 12 6v6l-4.24 4.24a6 6 0 0 0 8.48 0 5.98 5.98 0 0 0 0-8.48" fill="#000"/></svg>
<div class="a" style="left:1732.2px;top:900.5px;width:59px;height:59px;border-radius:10px;border:2px solid #eaecf4"></div>
<svg class="a" style="left:1733.8px;top:902.1px" width="56" height="56" viewBox="0 0 24 24" ><path d="M12 2C6.48 2 2 6.48 2 12s4.48 10 10 10 10-4.48 10-10S17.52 2 12 2zm-1 17.93c-3.94-.49-7-3.85-7-7.93s3.05-7.44 7-7.93v15.86zm2-15.86c1.03.13 2 .45 2.87.93H13v-.93zM13 7h5.24c.25.31.48.65.68 1H13V7zm0 3h6.74c.08.33.15.66.19 1H13v-1zm0 9.93V19h2.87c-.87.48-1.84.8-2.87.93zM18.24 17H13v-1h5.92c-.2.35-.43.69-.68 1zm1.5-3H13v-1h6.93c-.04.34-.11.67-.19 1z" fill="#000"/></svg>
<div class="a" style="left:1827.2px;top:900.5px;width:59px;height:59px;border-radius:10px;border:2px solid #eaecf4"></div>
<svg class="a" style="left:1828.8px;top:902.1px" width="56" height="56" viewBox="0 0 24 24" ><path d="m4.96 19.95 1.8-1.8-1.42-1.41-1.79 1.79m0-14.07 1.79 1.8 1.42-1.42-1.8-1.79m15.49 15.48-1.79-1.79-1.42 1.41 1.8 1.8M13 22.45V19.5h-2v2.95zm6.04-19.4-1.8 1.79 1.42 1.42 1.79-1.8M11 3.5h2V.55h-2M5 14.5h14v-6H5z" fill="#000"/></svg>
<div class="a" style="left:1922.2px;top:900.5px;width:59px;height:59px;border-radius:10px;border:2px solid #eaecf4"></div>
<svg class="a" style="left:1921.8px;top:902.1px" width="56" height="56" viewBox="0 0 24 24" ><path d="M20.87 14.37c-.14-.28-.37-.53-.63-.74-.28-.21-.61-.39-1.01-.53s-.85-.27-1.35-.38c-.35-.07-.64-.15-.88-.22-.22-.09-.4-.17-.54-.26a.7.7 0 0 1-.28-.3.9.9 0 0 1-.08-.39c0-.15.03-.28.09-.41a.8.8 0 0 1 .27-.34q.18-.15.45-.24c.18-.06.4-.09.64-.09.25 0 .45.03.66.11.19.07.35.17.48.29.13.13.22.26.31.42.04.16.08.32.08.49h1.95a2.52 2.52 0 0 0-.93-1.97c-.3-.25-.66-.44-1.1-.59-.42-.15-.91-.22-1.45-.22-.51 0-.98.07-1.39.21s-.77.33-1.06.57c-.29.22-.51.52-.67.84a2.2 2.2 0 0 0-.23 1.01c0 .37.08.68.23.96s.37.52.64.73.6.38.98.53.81.26 1.27.36c.39.08.71.17.95.26.23.09.43.19.57.29.13.1.22.24.27.34.05.12.07.25.07.4 0 .31-.13.56-.4.76-.28.2-.66.29-1.17.29-.22 0-.43-.02-.64-.08-.21-.05-.4-.13-.56-.24a1.33 1.33 0 0 1-.59-1.11h-1.89c0 .38.07.71.24 1.05.16.33.39.65.7.93.31.27.69.49 1.13.66.5.17 1 .24 1.6.24.53 0 1.01-.05 1.44-.18s.8-.32 1.11-.54c.31-.23.54-.51.71-.83s.25-.67.25-1.06c-.02-.39-.11-.74-.24-1.02m-9.26-1.4c-.16-.24-.36-.47-.61-.65a3.6 3.6 0 0 0-.94-.48c.3-.14.57-.3.8-.5s.42-.41.57-.64.27-.46.34-.7c.08-.25.11-.5.11-.74 0-.55-.09-1.04-.28-1.46-.18-.42-.44-.77-.78-1.06-.32-.28-.73-.5-1.2-.64-.45-.13-.97-.2-1.53-.2-.55 0-1.06.1-1.52.24q-.705.255-1.2.69c-.33.29-.6.63-.78 1.03-.2.39-.29.83-.29 1.29h1.98c0-.26.05-.49.14-.69.08-.2.22-.38.38-.52.17-.14.36-.25.58-.33s.46-.11.73-.11c.61 0 1.06.15 1.36.46s.44.75.44 1.32c0 .27-.04.52-.12.72-.08.24-.21.43-.38.59s-.38.28-.63.37-.55.13-.89.13H6.72v1.57H7.9c.34 0 .64.04.91.11.27.08.5.19.69.35s.34.38.44.61c.1.24.16.54.16.87 0 .62-.18 1.09-.53 1.4-.35.35-.84.5-1.45.5-.29 0-.56-.03-.8-.12-.24-.08-.44-.2-.61-.38q-.255-.21-.39-.54c-.09-.22-.14-.46-.14-.72H4.19c0 .55.11 1.03.31 1.45.22.42.5.77.87 1.05.36.26.77.49 1.24.63.47.13.96.21 1.48.21.57 0 1.09-.08 1.58-.23s.91-.38 1.26-.68c.36-.3.64-.67.84-1.1s.3-.93.3-1.48c0-.29-.04-.59-.11-.86-.08-.23-.19-.51-.35-.76" fill="#000"/></svg>
<div class="a" style="left:2017.2px;top:900.5px;width:59px;height:59px;border-radius:10px;border:2px solid #eaecf4"></div>
<svg class="a" style="left:2018.8px;top:902.1px" width="56" height="56" viewBox="0 0 24 24" ><path d="M12 20a7 7 0 0 1-7-7 7 7 0 0 1 7-7 7 7 0 0 1 7 7 7 7 0 0 1-7 7m7.03-12.61 1.42-1.42c-.45-.51-.9-.97-1.41-1.41L17.62 6c-1.55-1.26-3.5-2-5.62-2a9 9 0 0 0-9 9 9 9 0 0 0 9 9c5 0 9-4.03 9-9 0-2.12-.74-4.07-1.97-5.61M11 14h2V8h-2m4-7H9v2h6z" fill="#000"/></svg>
<div class="a" style="left:2112.2px;top:900.5px;width:59px;height:59px;border-radius:10px;border:2px solid #eaecf4"></div>
<svg class="a" style="left:2113.8px;top:902.1px" width="56" height="56" viewBox="0 0 24 24" ><path d="M21 3H3c-1.1 0-2 .9-2 2v14c0 1.1.9 2 2 2h18c1.1 0 2-.9 2-2V5c0-1.1-.9-2-2-2zm-9 15c-4.42 0-8-2.69-8-6s3.58-6 8-6 8 2.69 8 6-3.58 6-8 6z" fill="#000"/></svg>
<div class="a" style="left:1162.2px;top:992.5px;width:59px;height:59px;border-radius:10px;border:2px solid #eaecf4"></div>
<svg class="a" style="left:1163.8px;top:994.1px" width="56" height="56" viewBox="0 0 24 24" ><path d="m3.55 19.09 1.41 1.41 1.8-1.79-1.42-1.42M12 6c-3.31 0-6 2.69-6 6s2.69 6 6 6 6-2.69 6-6c0-3.32-2.69-6-6-6m8 7h3v-2h-3m-2.76 7.71 1.8 1.79 1.41-1.41-1.79-1.8M20.45 5l-1.41-1.4-1.8 1.79 1.42 1.42M13 1h-2v3h2M6.76 5.39 4.96 3.6 3.55 5l1.79 1.81zM1 13h3v-2H1m12 9h-2v3h2" fill="#000"/></svg>
<div class="a" style="left:1257.2px;top:992.5px;width:59px;height:59px;border-radius:10px;border:2px solid #eaecf4"></div>
<svg class="a" style="left:1258.8px;top:994.1px" width="56" height="56" viewBox="0 0 24 24" ><path d="M12.9 13.22q0 .9-.12 1.53c-.08.42-.2.75-.36 1.02-.16.26-.36.45-.59.57s-.51.16-.83.16c-.29 0-.57-.04-.81-.16q-.36-.18-.6-.57c-.16-.27-.29-.6-.38-1.02s-.13-.93-.13-1.53v-2.5c0-.6.04-1.11.13-1.52s.21-.74.38-1c.16-.25.36-.43.6-.55.24-.11.51-.15.81-.15.31 0 .58.04.81.15.24.11.44.29.6.55.16.25.29.58.37.99s.13.92.13 1.52v2.51m.91-6.17c-.32-.4-.75-.7-1.23-.88A4.7 4.7 0 0 0 11 5.9c-.58 0-1.11.1-1.59.27-.48.18-.91.47-1.23.88-.34.41-.6.95-.79 1.59-.18.65-.28 1.45-.28 2.39v1.92c0 .94.09 1.74.28 2.39.19.66.45 1.19.8 1.6.34.41.75.71 1.23.89a4.658 4.658 0 0 0 3.18 0c.48-.18.9-.48 1.22-.89.34-.41.6-.94.78-1.6.18-.65.28-1.45.28-2.39v-1.92c0-.94-.09-1.74-.28-2.39-.18-.64-.44-1.19-.78-1.59m9.96 7.32c-.14-.28-.35-.53-.63-.74s-.61-.39-1.01-.53-.85-.27-1.35-.38c-.35-.07-.64-.15-.87-.22-.23-.09-.42-.17-.55-.26a.7.7 0 0 1-.28-.3.9.9 0 0 1-.09-.39c0-.14.04-.28.1-.41a.8.8 0 0 1 .27-.34c.13-.1.27-.18.45-.24s.4-.09.64-.09c.25 0 .47.03.66.11.19.07.35.17.48.29.13.13.22.26.29.42.06.16.11.32.11.49h1.94c0-.39-.08-.75-.24-1.09s-.39-.63-.7-.88c-.29-.25-.65-.44-1.08-.59C21.5 9.07 21 9 20.46 9c-.51 0-.96.07-1.39.21-.41.14-.77.33-1.07.57-.28.22-.5.52-.66.84a2.2 2.2 0 0 0-.23 1.01c0 .37.08.69.23.96.16.28.36.52.66.73.25.21.58.38.96.53s.81.26 1.27.36c.39.08.71.17.95.26s.43.19.57.29c.13.1.22.24.25.34.07.12.09.25.09.4 0 .31-.13.56-.4.76s-.66.29-1.19.29c-.2 0-.41-.02-.62-.08a1.9 1.9 0 0 1-.56-.24c-.17-.11-.32-.26-.41-.44-.11-.18-.17-.41-.18-.67h-1.89c0 .38.08.71.24 1.05.16.33.39.65.7.93.31.27.69.49 1.15.66s.98.24 1.57.24c.54 0 1-.05 1.45-.18.43-.13.8-.32 1.11-.54.31-.23.54-.51.71-.83s.23-.67.23-1.06-.07-.74-.22-1.02M0 7.72V9.4l3-1V18h2V6h-.25z" fill="#000"/></svg>
<div class="a" style="left:1352.2px;top:992.5px;width:59px;height:59px;border-radius:10px;border:2px solid #eaecf4"></div>
<svg class="a" style="left:1353.8px;top:994.1px" width="56" height="56" viewBox="0 0 24 24" ><path d="M6.54 20c.77-2.6 1.16-5.28 1.16-8s-.39-5.4-1.16-8h10.91c-.77 2.6-1.16 5.28-1.16 8s.39 5.4 1.16 8m2.49 1.12c-1.1-2.94-1.64-6.03-1.64-9.12s.55-6.18 1.64-9.12c.06-.11.06-.22.06-.31 0-.34-.23-.57-.63-.57H4.63c-.4 0-.63.23-.63.57 0 .1 0 .2.06.31C5.16 5.82 5.71 8.91 5.71 12s-.55 6.18-1.64 9.12c-.07.11-.07.22-.07.31 0 .33.23.57.63.57h14.75c.39 0 .62-.24.62-.57 0-.1 0-.2-.06-.31" fill="#000"/></svg>
<div class="a" style="left:1447.2px;top:992.5px;width:59px;height:59px;border-radius:10px;border:2px solid #eaecf4"></div>
<svg class="a" style="left:1448.8px;top:994.1px" width="56" height="56" viewBox="0 0 24 24" ><path d="M23 15h-2v2h2zm0-4h-2v2h2zm0 8h-2v2c1 0 2-1 2-2M15 3h-2v2h2zm8 4h-2v2h2zm-2-4v2h2c0-1-1-2-2-2M3 21h8v-6H1v4a2 2 0 0 0 2 2M3 7H1v2h2zm12 12h-2v2h2zm4-16h-2v2h2zm0 16h-2v2h2zM3 3C2 3 1 4 1 5h2zm0 8H1v2h2zm8-8H9v2h2zM7 3H5v2h2z" fill="#000"/></svg>
<div class="a" style="left:1542.2px;top:992.5px;width:59px;height:59px;border-radius:10px;border:2px solid #eaecf4"></div>
<svg class="a" style="left:1543.8px;top:994.1px" width="56" height="56" viewBox="0 0 24 24" ><path d="M17 6c-3.31 0-6 2.69-6 6s2.69 6 6 6 6-2.69 6-6-2.69-6-6-6zM5 8c-2.21 0-4 1.79-4 4s1.79 4 4 4 4-1.79 4-4-1.79-4-4-4zm0 6c-1.1 0-2-.9-2-2s.9-2 2-2 2 .9 2 2-.9 2-2 2z" fill="#000"/></svg>
<div class="a" style="left:1637.2px;top:992.5px;width:59px;height:59px;border-radius:10px;border:2px solid #eaecf4"></div>
<svg class="a" style="left:1638.8px;top:994.1px" width="56" height="56" viewBox="0 0 24 24" ><path d="M3 9h4V5H3zm0 5h4v-4H3zm5 0h4v-4H8zm5 0h4v-4h-4zM8 9h4V5H8zm5-4v4h4V5zm5 9h4v-4h-4zM3 19h4v-4H3zm5 0h4v-4H8zm5 0h4v-4h-4zm5 0h4v-4h-4zm0-14v4h4V5z" fill="#000"/></svg>
<div class="a" style="left:1732.2px;top:992.5px;width:59px;height:59px;border-radius:10px;border:2px solid #eaecf4"></div>
<svg class="a" style="left:1733.8px;top:994.1px" width="56" height="56" viewBox="0 0 24 24" ><path d="M19 3H5c-1.1 0-2 .9-2 2v14c0 1.1.9 2 2 2h14c1.1 0 2-.9 2-2V5c0-1.1-.9-2-2-2zM5.5 7.5h2v-2H9v2h2V9H9v2H7.5V9h-2V7.5zM19 19H5L19 5v14zm-2-2v-1.5h-5V17h5z" fill="#000"/></svg>
<div class="a" style="left:1827.2px;top:992.5px;width:59px;height:59px;border-radius:10px;border:2px solid #eaecf4"></div>
<svg class="a" style="left:1828.8px;top:994.1px" width="56" height="56" viewBox="0 0 24 24" ><path d="M20 5h-3.2L15 3H9L7.2 5H4c-1.1 0-2 .9-2 2v12c0 1.1.9 2 2 2h16c1.1 0 2-.9 2-2V7c0-1.1-.9-2-2-2zm0 14h-8v-1c-2.8 0-5-2.2-5-5s2.2-5 5-5V7h8v12zm-3-6c0-2.8-2.2-5-5-5v1.8c1.8 0 3.2 1.4 3.2 3.2s-1.4 3.2-3.2 3.2V18c2.8 0 5-2.2 5-5zm-8.2 0c0 1.8 1.4 3.2 3.2 3.2V9.8c-1.8 0-3.2 1.4-3.2 3.2z" fill="#000"/></svg>
<div class="a" style="left:1922.2px;top:992.5px;width:59px;height:59px;border-radius:10px;border:2px solid #eaecf4"></div>
<svg class="a" style="left:1923.8px;top:997.1px" width="56" height="56" viewBox="0 0 24 24" ><path d="M13 4.07V1L8.45 5.55 13 10V6.09c2.84.48 5 2.94 5 5.91s-2.16 5.43-5 5.91v2.02c3.95-.49 7-3.85 7-7.93s-3.05-7.44-7-7.93M7.1 18.32c1.16.9 2.51 1.44 3.9 1.61V17.9c-.87-.15-1.71-.49-2.46-1.03zM6.09 13H4.07c.17 1.39.72 2.73 1.62 3.89l1.41-1.42c-.52-.75-.87-1.59-1.01-2.47m1.02-4.47L5.7 7.11C4.8 8.27 4.24 9.61 4.07 11h2.02c.14-.87.49-1.72 1.02-2.47" fill="#000"/></svg>
<div class="a" style="left:2017.2px;top:992.5px;width:59px;height:59px;border-radius:10px;border:2px solid #eaecf4"></div>
<svg class="a" style="left:2018.8px;top:994.1px" width="56" height="56" viewBox="0 0 24 24" ><path d="m2.53 19.65 1.34.56v-9.03l-2.43 5.86c-.41 1.02.06 2.19 1.09 2.61m19.5-3.7L17.07 4a2 2 0 0 0-1.81-1.25c-.26 0-.53.04-.79.15L7.1 5.95a2.02 2.02 0 0 0-1.23 1.8c-.01.25.04.54.13.8l5 11.95c.29.78 1.03 1.24 1.81 1.25.26 0 .52-.05.77-.15l7.36-3.05a1.994 1.994 0 0 0 1.09-2.6M7.88 8.75a1 1 0 0 1-1-1 1 1 0 0 1 1-1c.55 0 1 .45 1 1s-.45 1-1 1m-2 11a2 2 0 0 0 2 2h1.45l-3.45-8.34z" fill="#000"/></svg>
<div class="a" style="left:2112.2px;top:992.5px;width:59px;height:59px;border-radius:10px;border:2px solid #eaecf4"></div>
<svg class="a" style="left:2113.8px;top:994.1px" width="56" height="56" viewBox="0 0 24 24" ><path d="M7.34 6.41.86 12.9l6.49 6.48 6.49-6.48zM3.69 12.9l3.66-3.66L11 12.9l-3.66 3.66zm15.67-6.26A8.95 8.95 0 0 0 13 4V.76L8.76 5 13 9.24V6c1.79 0 3.58.68 4.95 2.05a7.007 7.007 0 0 1 0 9.9 6.97 6.97 0 0 1-7.79 1.44l-1.49 1.49C10 21.62 11.5 22 13 22c2.3 0 4.61-.88 6.36-2.64a8.98 8.98 0 0 0 0-12.72" fill="#000"/></svg>
<div class="a" style="left:1110px;top:1034px;width:1130px;height:120px;background:#fff;border-radius:0 0 16px 0"></div>
<div class="a" style="left:2224px;top:154px;width:16px;height:880px;background:#f0f0f0"></div>
<div class="a" style="left:2224px;top:153px;width:16px;height:521px;border-radius:8px;background:#8b8b8b"></div>
<div class="a" style="left:1808px;top:1062px;width:400px;height:60px;border-radius:9px;background:#3b76f6;box-shadow:0 3px 4px rgba(59,118,246,.12)"></div>
<div class="a t" style="top:1072.5px;font-size:28px;line-height:39px;color:#fff;letter-spacing:0.5px;left:1708px;width:600px;text-align:center;-webkit-text-stroke:0.5px #fff;">Use selected components</div>
</body></html>
